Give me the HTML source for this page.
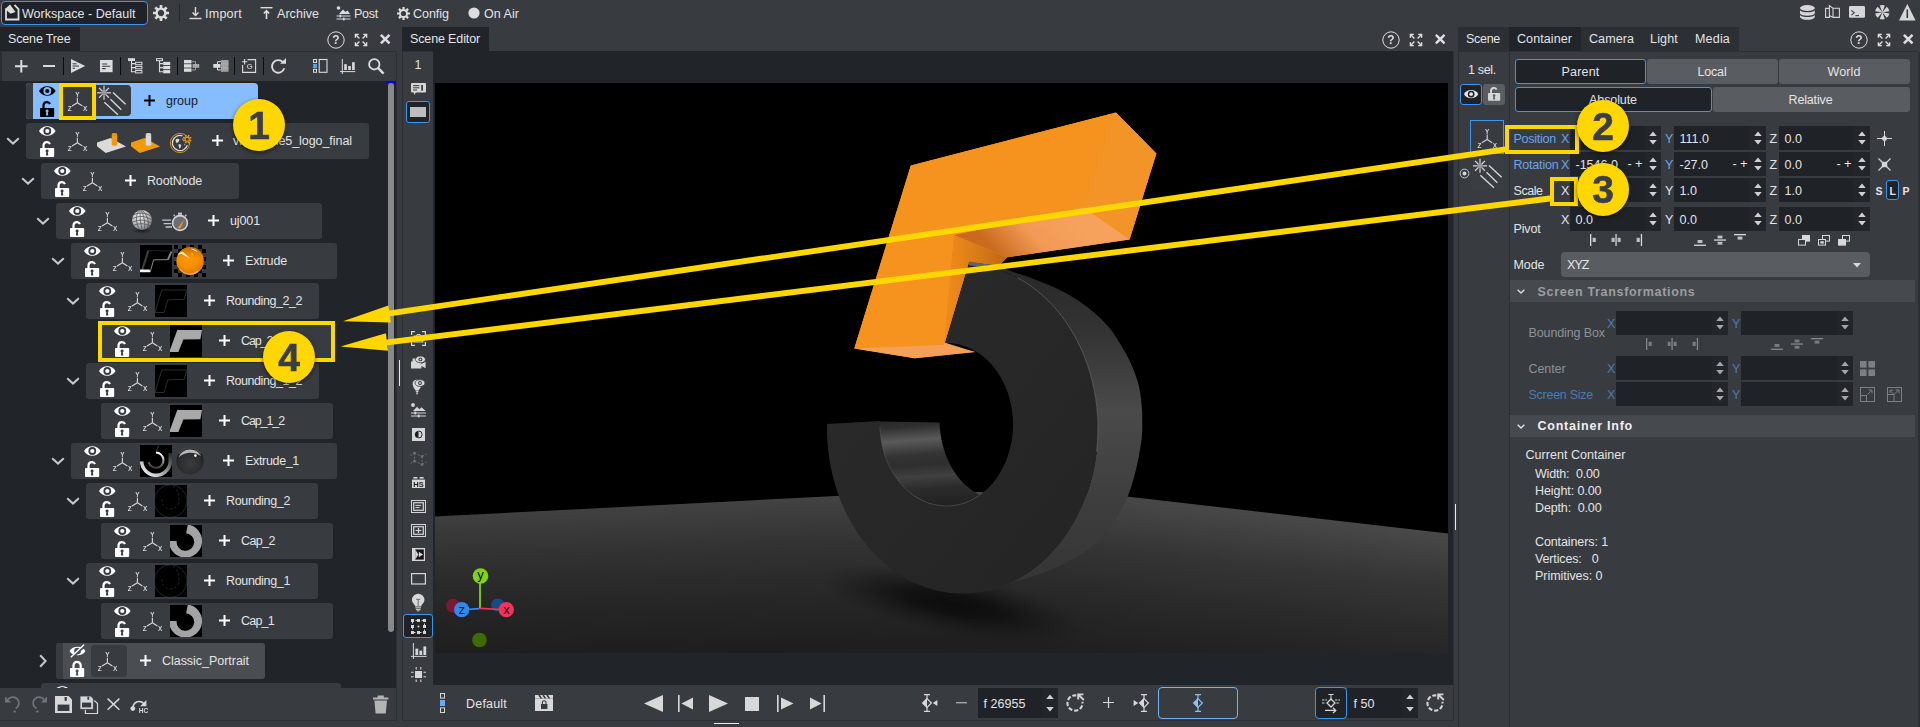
<!DOCTYPE html>
<html><head><meta charset="utf-8"><title>Viz Artist</title>
<style>
html,body{margin:0;padding:0;background:#383b40;}
body{width:1920px;height:727px;overflow:hidden;position:relative;font-family:"Liberation Sans", sans-serif;font-size:12.5px;color:#e4e4e4;}
div,svg{position:absolute;box-sizing:border-box;}
svg{overflow:visible;}
</style></head><body>
<div style="left:1px;top:1px;width:147px;height:24px;background:#1f2228;border:1.5px solid #3a96f0;border-radius:4px;"></div>
<svg style="left:4px;top:4px;" width="17" height="17" viewBox="0 0 17 17"><path d="M2 4.5 V15.5 H14.5 V5 L10.5 1" fill="none" stroke="#ddd" stroke-width="1.8"/><path d="M1 5 L6 0.5 L11.5 8 L6.5 9.8 Z" fill="#ddd"/></svg>
<div style="left:22.00px;top:3.50px;height:20px;line-height:20px;font-size:12.5px;color:#e4e4e4;white-space:pre;letter-spacing:0.025px;">Workspace - Default</div>
<svg style="left:152px;top:3.5px;" width="18" height="18" viewBox="0 0 18 18"><g transform="translate(9,9)"><path d="M4.96 0.00 L8.00 0.00 M3.51 3.51 L5.66 5.66 M0.00 4.96 L0.00 8.00 M-3.51 3.51 L-5.66 5.66 M-4.96 0.00 L-8.00 0.00 M-3.51 -3.51 L-5.66 -5.66 M-0.00 -4.96 L-0.00 -8.00 M3.51 -3.51 L5.66 -5.66 " stroke="#ddd" stroke-width="2.72" fill="none"/><circle r="4.40" fill="none" stroke="#ddd" stroke-width="2.40"/></g></svg>
<div style="left:179px;top:4px;width:1px;height:18px;background:#25282c;"></div>
<svg style="left:189px;top:7px;" width="13" height="13" viewBox="0 0 13 13"><path d="M6.5 0 V8 M3.5 5.5 L6.5 8.5 L9.5 5.5" fill="none" stroke="#ddd" stroke-width="1.4"/><path d="M0.5 11.5 H12.5" stroke="#ddd" stroke-width="1.4"/></svg>
<div style="left:205.00px;top:3.50px;height:20px;line-height:20px;font-size:12.5px;color:#e4e4e4;white-space:pre;letter-spacing:0.260px;">Import</div>
<svg style="left:260px;top:7px;" width="13" height="13" viewBox="0 0 13 13"><path d="M0.5 0.7 H12.5" stroke="#ddd" stroke-width="1.4"/><path d="M6.5 12 V4 M3.8 6.5 L6.5 3.6 L9.2 6.5" fill="none" stroke="#ddd" stroke-width="1.6"/></svg>
<div style="left:277.00px;top:3.50px;height:20px;line-height:20px;font-size:12.5px;color:#e4e4e4;white-space:pre;letter-spacing:0.045px;">Archive</div>
<svg style="left:336px;top:6px;" width="15" height="15" viewBox="0 0 15 15"><circle cx="2.5" cy="2" r="1.8" fill="#ddd"/><path d="M3 8 L7 3.5 L9.5 6 L11.5 4.5 L14 8 Z" fill="#ddd"/><path d="M0.5 10 H14.5 M0.5 13 H14.5" stroke="#ddd" stroke-width="1.1"/><rect x="3.5" y="8.6" width="1.6" height="2.8" fill="#ddd"/><rect x="7" y="11.6" width="1.6" height="2.8" fill="#ddd"/></svg>
<div style="left:354.00px;top:3.50px;height:20px;line-height:20px;font-size:12.5px;color:#e4e4e4;white-space:pre;letter-spacing:-0.254px;">Post</div>
<svg style="left:395.5px;top:5.5px;" width="15.0" height="15.0" viewBox="0 0 15.0 15.0"><g transform="translate(7.5,7.5)"><path d="M4.03 0.00 L6.50 0.00 M2.85 2.85 L4.60 4.60 M0.00 4.03 L0.00 6.50 M-2.85 2.85 L-4.60 4.60 M-4.03 0.00 L-6.50 0.00 M-2.85 -2.85 L-4.60 -4.60 M-0.00 -4.03 L-0.00 -6.50 M2.85 -2.85 L4.60 -4.60 " stroke="#ddd" stroke-width="2.21" fill="none"/><circle r="3.58" fill="none" stroke="#ddd" stroke-width="1.95"/></g></svg>
<div style="left:413.00px;top:3.50px;height:20px;line-height:20px;font-size:12.5px;color:#e4e4e4;white-space:pre;letter-spacing:-0.023px;">Config</div>
<svg style="left:468px;top:7px;" width="12" height="12" viewBox="0 0 12 12"><circle cx="6" cy="6" r="5.6" fill="#ddd"/></svg>
<div style="left:484.00px;top:3.50px;height:20px;line-height:20px;font-size:12.5px;color:#e4e4e4;white-space:pre;letter-spacing:0.042px;">On Air</div>
<div style="left:0px;top:51px;width:396px;height:1px;background:#2d3035;"></div>
<div style="left:402px;top:51px;width:1051px;height:1px;background:#2d3035;"></div>
<div style="left:1458px;top:51px;width:460px;height:1px;background:#2d3035;"></div>
<svg style="left:1799.6px;top:4.6px;" width="14.8" height="14.8" viewBox="0 0 14.8 14.8"><ellipse cx="7.4" cy="3" rx="7.4" ry="3" fill="#d6d6d6"/><path d="M0 5.2 C1.6 8 13.2 8 14.8 5.2 V8.4 C13.2 11.4 1.6 11.4 0 8.4 Z M0 10 C1.6 12.8 13.2 12.8 14.8 10 V12.2 C13.2 15.6 1.6 15.6 0 12.2 Z" fill="#d6d6d6"/></svg>
<svg style="left:1825px;top:5.4px;" width="15" height="13" viewBox="0 0 15 13"><path d="M0.6 3.4 H4.4 V12.4 H0.6 Z M4.4 0.6 L8 3.2 V12.4 L4.4 10.6 Z M8 3.2 H14.4 V12.4 H8 Z" fill="none" stroke="#d6d6d6" stroke-width="1.1"/></svg>
<svg style="left:1849px;top:6px;" width="16" height="11.8" viewBox="0 0 16 11.8"><rect width="16" height="11.8" rx="1.4" fill="#d6d6d6"/><path d="M2.4 4.4 L5.2 6.8 L2.4 9.2" fill="none" stroke="#383b40" stroke-width="1.1"/><path d="M6.4 9.6 H10" stroke="#383b40" stroke-width="1.1"/></svg>
<svg style="left:1874.6px;top:4.9px;" width="14.6" height="14.6" viewBox="-7.3 -7.3 14.6 14.6"><path d="M0 0 L-2.54 -6.74 A7.2 7.2 0 0 1 2.54 -6.74 Z M0 0 L4.57 -5.57 A7.2 7.2 0 0 1 7.10 -1.17 Z M0 0 L7.10 1.17 A7.2 7.2 0 0 1 4.57 5.57 Z M0 0 L2.54 6.74 A7.2 7.2 0 0 1 -2.54 6.74 Z M0 0 L-4.57 5.57 A7.2 7.2 0 0 1 -7.10 1.17 Z M0 0 L-7.10 -1.17 A7.2 7.2 0 0 1 -4.57 -5.57 Z " fill="#d6d6d6"/></svg>
<svg style="left:1898.6px;top:3.8px;" width="16.6" height="16.4" viewBox="0 0 16.6 16.4"><path d="M8.3 0 L16.6 16.4 H0 Z" fill="#d6d6d6"/><rect x="7.5" y="5.4" width="1.6" height="8.6" fill="#383b40"/></svg>
<div style="left:0px;top:27px;width:80px;height:24px;background:#212429;"></div>
<div style="left:8.00px;top:29.00px;height:20px;line-height:20px;font-size:12.5px;color:#e4e4e4;white-space:pre;letter-spacing:-0.144px;">Scene Tree</div>
<svg style="left:326.5px;top:30.6px;will-change:transform;" width="18" height="18" viewBox="0 0 18 18"><circle cx="9" cy="9" r="8.2" fill="none" stroke="#dedede" stroke-width="1"/><text x="9" y="13.2" font-size="12" font-weight="700" fill="#dedede" text-anchor="middle" font-family="Liberation Sans, sans-serif">?</text></svg><svg style="left:354.5px;top:33.6px;" width="12" height="12" viewBox="0 0 12 12"><path d="M0.4 3.8 V0.4 H3.8 M8.2 0.4 H11.6 V3.8 M11.6 8.2 V11.6 H8.2 M3.8 11.6 H0.4 V8.2" fill="none" stroke="#dedede" stroke-width="1.4"/><path d="M0.8 0.8 L4.4 4.4 M11.2 0.8 L7.6 4.4 M11.2 11.2 L7.6 7.6 M0.8 11.2 L4.4 7.6" stroke="#dedede" stroke-width="1.4"/></svg><svg style="left:379.8px;top:34.4px;" width="10.4" height="10.4" viewBox="0 0 10.4 10.4"><path d="M0.9 0.9 L9.5 9.5 M9.5 0.9 L0.9 9.5" stroke="#dedede" stroke-width="2.5"/></svg>
<div style="left:2px;top:52px;width:394px;height:29px;background:#383b40;"></div>
<div style="left:0px;top:81px;width:396px;height:607px;background:#212429;overflow:hidden;"><div style="left:26px;top:2px;width:232px;height:36px;background:#86bdff;border-radius:4px;"></div><div style="left:26px;top:2px;width:7px;height:36px;background:#383b40;border-radius:4px 0 0 4px;"></div><div style="left:63px;top:4px;width:68px;height:31px;background:#383b40;border-radius:0 4px 4px 0;"></div><svg style="left:38.7px;top:4px;" width="16.6" height="12.0" viewBox="0 0 16.6 12"><path d="M0 6 C3.2 -0.4 13.4 -0.4 16.6 6 C13.4 12.4 3.2 12.4 0 6 Z" fill="#000"/><circle cx="8.3" cy="6" r="3.9" fill="#86bdff"/><circle cx="8.3" cy="6" r="2.1" fill="#000"/></svg><svg style="left:39.9px;top:20px;" width="14.2" height="16.0" viewBox="0 0 14.2 16"><path d="M3.5 7.5 V4.4 A3.4 3.4 0 0 1 10 3.1" fill="none" stroke="#000" stroke-width="2.2"/><rect x="0" y="7" width="14.2" height="9" rx="0.9" fill="#000"/><circle cx="7.1" cy="9.9" r="1.5" fill="#86bdff"/><path d="M6.5 10 L5.9 14.5 H8.3 L7.7 10 Z" fill="#86bdff"/></svg><svg style="left:65px;top:9px;will-change:transform;" width="25.0" height="25.0" viewBox="-12 -12 25.00 25.00"><g transform="translate(0.40,0.80)"><path d="M0 -5 V0 M0 0 L-5.4 3.3 M0 0 L5 3.3" stroke="#d4d4d4" stroke-width="1.15" fill="none"/><text x="0" y="-5.7" font-size="6.4" fill="#d4d4d4" text-anchor="middle" font-family="Liberation Sans, sans-serif" font-weight="700">Y</text><text x="-7.8" y="8.3" font-size="6.4" fill="#d4d4d4" text-anchor="middle" font-family="Liberation Sans, sans-serif" font-weight="700">Z</text><text x="7.8" y="8.3" font-size="6.4" fill="#d4d4d4" text-anchor="middle" font-family="Liberation Sans, sans-serif" font-weight="700">X</text></g></svg><div style="left:26px;top:42px;width:343px;height:36px;background:#383b40;border-radius:3px;"></div><svg style="left:38.7px;top:44px;" width="16.6" height="12.0" viewBox="0 0 16.6 12"><path d="M0 6 C3.2 -0.4 13.4 -0.4 16.6 6 C13.4 12.4 3.2 12.4 0 6 Z" fill="#fff"/><circle cx="8.3" cy="6" r="3.9" fill="#383b40"/><circle cx="8.3" cy="6" r="2.1" fill="#fff"/></svg><svg style="left:39.9px;top:60px;" width="14.2" height="16.0" viewBox="0 0 14.2 16"><path d="M3.5 7.5 V4.4 A3.4 3.4 0 0 1 10 3.1" fill="none" stroke="#fff" stroke-width="2.2"/><rect x="0" y="7" width="14.2" height="9" rx="0.9" fill="#fff"/><circle cx="7.1" cy="9.9" r="1.5" fill="#383b40"/><path d="M6.5 10 L5.9 14.5 H8.3 L7.7 10 Z" fill="#383b40"/></svg><svg style="left:65px;top:49px;will-change:transform;" width="25.0" height="25.0" viewBox="-12 -12 25.00 25.00"><g transform="translate(0.40,0.80)"><path d="M0 -5 V0 M0 0 L-5.4 3.3 M0 0 L5 3.3" stroke="#d4d4d4" stroke-width="1.15" fill="none"/><text x="0" y="-5.7" font-size="6.4" fill="#d4d4d4" text-anchor="middle" font-family="Liberation Sans, sans-serif" font-weight="700">Y</text><text x="-7.8" y="8.3" font-size="6.4" fill="#d4d4d4" text-anchor="middle" font-family="Liberation Sans, sans-serif" font-weight="700">Z</text><text x="7.8" y="8.3" font-size="6.4" fill="#d4d4d4" text-anchor="middle" font-family="Liberation Sans, sans-serif" font-weight="700">X</text></g></svg><svg style="left:6px;top:56px;" width="14" height="8" viewBox="0 0 14 8"><path d="M1.2 1.2 L7 6.6 L12.8 1.2" fill="none" stroke="#c8c8c8" stroke-width="2"/></svg><div style="left:41px;top:82px;width:198px;height:36px;background:#383b40;border-radius:3px;"></div><svg style="left:53.7px;top:84px;" width="16.6" height="12.0" viewBox="0 0 16.6 12"><path d="M0 6 C3.2 -0.4 13.4 -0.4 16.6 6 C13.4 12.4 3.2 12.4 0 6 Z" fill="#fff"/><circle cx="8.3" cy="6" r="3.9" fill="#383b40"/><circle cx="8.3" cy="6" r="2.1" fill="#fff"/></svg><svg style="left:54.9px;top:100px;" width="14.2" height="16.0" viewBox="0 0 14.2 16"><path d="M3.5 7.5 V4.4 A3.4 3.4 0 0 1 10 3.1" fill="none" stroke="#fff" stroke-width="2.2"/><rect x="0" y="7" width="14.2" height="9" rx="0.9" fill="#fff"/><circle cx="7.1" cy="9.9" r="1.5" fill="#383b40"/><path d="M6.5 10 L5.9 14.5 H8.3 L7.7 10 Z" fill="#383b40"/></svg><svg style="left:80px;top:89px;will-change:transform;" width="25.0" height="25.0" viewBox="-12 -12 25.00 25.00"><g transform="translate(0.40,0.80)"><path d="M0 -5 V0 M0 0 L-5.4 3.3 M0 0 L5 3.3" stroke="#d4d4d4" stroke-width="1.15" fill="none"/><text x="0" y="-5.7" font-size="6.4" fill="#d4d4d4" text-anchor="middle" font-family="Liberation Sans, sans-serif" font-weight="700">Y</text><text x="-7.8" y="8.3" font-size="6.4" fill="#d4d4d4" text-anchor="middle" font-family="Liberation Sans, sans-serif" font-weight="700">Z</text><text x="7.8" y="8.3" font-size="6.4" fill="#d4d4d4" text-anchor="middle" font-family="Liberation Sans, sans-serif" font-weight="700">X</text></g></svg><svg style="left:21px;top:96px;" width="14" height="8" viewBox="0 0 14 8"><path d="M1.2 1.2 L7 6.6 L12.8 1.2" fill="none" stroke="#c8c8c8" stroke-width="2"/></svg><div style="left:56px;top:122px;width:266px;height:36px;background:#383b40;border-radius:3px;"></div><svg style="left:68.7px;top:124px;" width="16.6" height="12.0" viewBox="0 0 16.6 12"><path d="M0 6 C3.2 -0.4 13.4 -0.4 16.6 6 C13.4 12.4 3.2 12.4 0 6 Z" fill="#fff"/><circle cx="8.3" cy="6" r="3.9" fill="#383b40"/><circle cx="8.3" cy="6" r="2.1" fill="#fff"/></svg><svg style="left:69.9px;top:140px;" width="14.2" height="16.0" viewBox="0 0 14.2 16"><path d="M3.5 7.5 V4.4 A3.4 3.4 0 0 1 10 3.1" fill="none" stroke="#fff" stroke-width="2.2"/><rect x="0" y="7" width="14.2" height="9" rx="0.9" fill="#fff"/><circle cx="7.1" cy="9.9" r="1.5" fill="#383b40"/><path d="M6.5 10 L5.9 14.5 H8.3 L7.7 10 Z" fill="#383b40"/></svg><svg style="left:95px;top:129px;will-change:transform;" width="25.0" height="25.0" viewBox="-12 -12 25.00 25.00"><g transform="translate(0.40,0.80)"><path d="M0 -5 V0 M0 0 L-5.4 3.3 M0 0 L5 3.3" stroke="#d4d4d4" stroke-width="1.15" fill="none"/><text x="0" y="-5.7" font-size="6.4" fill="#d4d4d4" text-anchor="middle" font-family="Liberation Sans, sans-serif" font-weight="700">Y</text><text x="-7.8" y="8.3" font-size="6.4" fill="#d4d4d4" text-anchor="middle" font-family="Liberation Sans, sans-serif" font-weight="700">Z</text><text x="7.8" y="8.3" font-size="6.4" fill="#d4d4d4" text-anchor="middle" font-family="Liberation Sans, sans-serif" font-weight="700">X</text></g></svg><svg style="left:36px;top:136px;" width="14" height="8" viewBox="0 0 14 8"><path d="M1.2 1.2 L7 6.6 L12.8 1.2" fill="none" stroke="#c8c8c8" stroke-width="2"/></svg><div style="left:71px;top:162px;width:266px;height:36px;background:#383b40;border-radius:3px;"></div><svg style="left:83.7px;top:164px;" width="16.6" height="12.0" viewBox="0 0 16.6 12"><path d="M0 6 C3.2 -0.4 13.4 -0.4 16.6 6 C13.4 12.4 3.2 12.4 0 6 Z" fill="#fff"/><circle cx="8.3" cy="6" r="3.9" fill="#383b40"/><circle cx="8.3" cy="6" r="2.1" fill="#fff"/></svg><svg style="left:84.9px;top:180px;" width="14.2" height="16.0" viewBox="0 0 14.2 16"><path d="M3.5 7.5 V4.4 A3.4 3.4 0 0 1 10 3.1" fill="none" stroke="#fff" stroke-width="2.2"/><rect x="0" y="7" width="14.2" height="9" rx="0.9" fill="#fff"/><circle cx="7.1" cy="9.9" r="1.5" fill="#383b40"/><path d="M6.5 10 L5.9 14.5 H8.3 L7.7 10 Z" fill="#383b40"/></svg><svg style="left:110px;top:169px;will-change:transform;" width="25.0" height="25.0" viewBox="-12 -12 25.00 25.00"><g transform="translate(0.40,0.80)"><path d="M0 -5 V0 M0 0 L-5.4 3.3 M0 0 L5 3.3" stroke="#d4d4d4" stroke-width="1.15" fill="none"/><text x="0" y="-5.7" font-size="6.4" fill="#d4d4d4" text-anchor="middle" font-family="Liberation Sans, sans-serif" font-weight="700">Y</text><text x="-7.8" y="8.3" font-size="6.4" fill="#d4d4d4" text-anchor="middle" font-family="Liberation Sans, sans-serif" font-weight="700">Z</text><text x="7.8" y="8.3" font-size="6.4" fill="#d4d4d4" text-anchor="middle" font-family="Liberation Sans, sans-serif" font-weight="700">X</text></g></svg><svg style="left:51px;top:176px;" width="14" height="8" viewBox="0 0 14 8"><path d="M1.2 1.2 L7 6.6 L12.8 1.2" fill="none" stroke="#c8c8c8" stroke-width="2"/></svg><div style="left:86px;top:202px;width:233px;height:36px;background:#383b40;border-radius:3px;"></div><svg style="left:98.7px;top:204px;" width="16.6" height="12.0" viewBox="0 0 16.6 12"><path d="M0 6 C3.2 -0.4 13.4 -0.4 16.6 6 C13.4 12.4 3.2 12.4 0 6 Z" fill="#fff"/><circle cx="8.3" cy="6" r="3.9" fill="#383b40"/><circle cx="8.3" cy="6" r="2.1" fill="#fff"/></svg><svg style="left:99.9px;top:220px;" width="14.2" height="16.0" viewBox="0 0 14.2 16"><path d="M3.5 7.5 V4.4 A3.4 3.4 0 0 1 10 3.1" fill="none" stroke="#fff" stroke-width="2.2"/><rect x="0" y="7" width="14.2" height="9" rx="0.9" fill="#fff"/><circle cx="7.1" cy="9.9" r="1.5" fill="#383b40"/><path d="M6.5 10 L5.9 14.5 H8.3 L7.7 10 Z" fill="#383b40"/></svg><svg style="left:125px;top:209px;will-change:transform;" width="25.0" height="25.0" viewBox="-12 -12 25.00 25.00"><g transform="translate(0.40,0.80)"><path d="M0 -5 V0 M0 0 L-5.4 3.3 M0 0 L5 3.3" stroke="#d4d4d4" stroke-width="1.15" fill="none"/><text x="0" y="-5.7" font-size="6.4" fill="#d4d4d4" text-anchor="middle" font-family="Liberation Sans, sans-serif" font-weight="700">Y</text><text x="-7.8" y="8.3" font-size="6.4" fill="#d4d4d4" text-anchor="middle" font-family="Liberation Sans, sans-serif" font-weight="700">Z</text><text x="7.8" y="8.3" font-size="6.4" fill="#d4d4d4" text-anchor="middle" font-family="Liberation Sans, sans-serif" font-weight="700">X</text></g></svg><svg style="left:66px;top:216px;" width="14" height="8" viewBox="0 0 14 8"><path d="M1.2 1.2 L7 6.6 L12.8 1.2" fill="none" stroke="#c8c8c8" stroke-width="2"/></svg><div style="left:101px;top:242px;width:232px;height:36px;background:#383b40;border-radius:3px;"></div><svg style="left:113.7px;top:244px;" width="16.6" height="12.0" viewBox="0 0 16.6 12"><path d="M0 6 C3.2 -0.4 13.4 -0.4 16.6 6 C13.4 12.4 3.2 12.4 0 6 Z" fill="#fff"/><circle cx="8.3" cy="6" r="3.9" fill="#383b40"/><circle cx="8.3" cy="6" r="2.1" fill="#fff"/></svg><svg style="left:114.9px;top:260px;" width="14.2" height="16.0" viewBox="0 0 14.2 16"><path d="M3.5 7.5 V4.4 A3.4 3.4 0 0 1 10 3.1" fill="none" stroke="#fff" stroke-width="2.2"/><rect x="0" y="7" width="14.2" height="9" rx="0.9" fill="#fff"/><circle cx="7.1" cy="9.9" r="1.5" fill="#383b40"/><path d="M6.5 10 L5.9 14.5 H8.3 L7.7 10 Z" fill="#383b40"/></svg><svg style="left:140px;top:249px;will-change:transform;" width="25.0" height="25.0" viewBox="-12 -12 25.00 25.00"><g transform="translate(0.40,0.80)"><path d="M0 -5 V0 M0 0 L-5.4 3.3 M0 0 L5 3.3" stroke="#d4d4d4" stroke-width="1.15" fill="none"/><text x="0" y="-5.7" font-size="6.4" fill="#d4d4d4" text-anchor="middle" font-family="Liberation Sans, sans-serif" font-weight="700">Y</text><text x="-7.8" y="8.3" font-size="6.4" fill="#d4d4d4" text-anchor="middle" font-family="Liberation Sans, sans-serif" font-weight="700">Z</text><text x="7.8" y="8.3" font-size="6.4" fill="#d4d4d4" text-anchor="middle" font-family="Liberation Sans, sans-serif" font-weight="700">X</text></g></svg><div style="left:86px;top:282px;width:233px;height:36px;background:#383b40;border-radius:3px;"></div><svg style="left:98.7px;top:284px;" width="16.6" height="12.0" viewBox="0 0 16.6 12"><path d="M0 6 C3.2 -0.4 13.4 -0.4 16.6 6 C13.4 12.4 3.2 12.4 0 6 Z" fill="#fff"/><circle cx="8.3" cy="6" r="3.9" fill="#383b40"/><circle cx="8.3" cy="6" r="2.1" fill="#fff"/></svg><svg style="left:99.9px;top:300px;" width="14.2" height="16.0" viewBox="0 0 14.2 16"><path d="M3.5 7.5 V4.4 A3.4 3.4 0 0 1 10 3.1" fill="none" stroke="#fff" stroke-width="2.2"/><rect x="0" y="7" width="14.2" height="9" rx="0.9" fill="#fff"/><circle cx="7.1" cy="9.9" r="1.5" fill="#383b40"/><path d="M6.5 10 L5.9 14.5 H8.3 L7.7 10 Z" fill="#383b40"/></svg><svg style="left:125px;top:289px;will-change:transform;" width="25.0" height="25.0" viewBox="-12 -12 25.00 25.00"><g transform="translate(0.40,0.80)"><path d="M0 -5 V0 M0 0 L-5.4 3.3 M0 0 L5 3.3" stroke="#d4d4d4" stroke-width="1.15" fill="none"/><text x="0" y="-5.7" font-size="6.4" fill="#d4d4d4" text-anchor="middle" font-family="Liberation Sans, sans-serif" font-weight="700">Y</text><text x="-7.8" y="8.3" font-size="6.4" fill="#d4d4d4" text-anchor="middle" font-family="Liberation Sans, sans-serif" font-weight="700">Z</text><text x="7.8" y="8.3" font-size="6.4" fill="#d4d4d4" text-anchor="middle" font-family="Liberation Sans, sans-serif" font-weight="700">X</text></g></svg><svg style="left:66px;top:296px;" width="14" height="8" viewBox="0 0 14 8"><path d="M1.2 1.2 L7 6.6 L12.8 1.2" fill="none" stroke="#c8c8c8" stroke-width="2"/></svg><div style="left:101px;top:322px;width:232px;height:36px;background:#383b40;border-radius:3px;"></div><svg style="left:113.7px;top:324px;" width="16.6" height="12.0" viewBox="0 0 16.6 12"><path d="M0 6 C3.2 -0.4 13.4 -0.4 16.6 6 C13.4 12.4 3.2 12.4 0 6 Z" fill="#fff"/><circle cx="8.3" cy="6" r="3.9" fill="#383b40"/><circle cx="8.3" cy="6" r="2.1" fill="#fff"/></svg><svg style="left:114.9px;top:340px;" width="14.2" height="16.0" viewBox="0 0 14.2 16"><path d="M3.5 7.5 V4.4 A3.4 3.4 0 0 1 10 3.1" fill="none" stroke="#fff" stroke-width="2.2"/><rect x="0" y="7" width="14.2" height="9" rx="0.9" fill="#fff"/><circle cx="7.1" cy="9.9" r="1.5" fill="#383b40"/><path d="M6.5 10 L5.9 14.5 H8.3 L7.7 10 Z" fill="#383b40"/></svg><svg style="left:140px;top:329px;will-change:transform;" width="25.0" height="25.0" viewBox="-12 -12 25.00 25.00"><g transform="translate(0.40,0.80)"><path d="M0 -5 V0 M0 0 L-5.4 3.3 M0 0 L5 3.3" stroke="#d4d4d4" stroke-width="1.15" fill="none"/><text x="0" y="-5.7" font-size="6.4" fill="#d4d4d4" text-anchor="middle" font-family="Liberation Sans, sans-serif" font-weight="700">Y</text><text x="-7.8" y="8.3" font-size="6.4" fill="#d4d4d4" text-anchor="middle" font-family="Liberation Sans, sans-serif" font-weight="700">Z</text><text x="7.8" y="8.3" font-size="6.4" fill="#d4d4d4" text-anchor="middle" font-family="Liberation Sans, sans-serif" font-weight="700">X</text></g></svg><div style="left:71px;top:362px;width:266px;height:36px;background:#383b40;border-radius:3px;"></div><svg style="left:83.7px;top:364px;" width="16.6" height="12.0" viewBox="0 0 16.6 12"><path d="M0 6 C3.2 -0.4 13.4 -0.4 16.6 6 C13.4 12.4 3.2 12.4 0 6 Z" fill="#fff"/><circle cx="8.3" cy="6" r="3.9" fill="#383b40"/><circle cx="8.3" cy="6" r="2.1" fill="#fff"/></svg><svg style="left:84.9px;top:380px;" width="14.2" height="16.0" viewBox="0 0 14.2 16"><path d="M3.5 7.5 V4.4 A3.4 3.4 0 0 1 10 3.1" fill="none" stroke="#fff" stroke-width="2.2"/><rect x="0" y="7" width="14.2" height="9" rx="0.9" fill="#fff"/><circle cx="7.1" cy="9.9" r="1.5" fill="#383b40"/><path d="M6.5 10 L5.9 14.5 H8.3 L7.7 10 Z" fill="#383b40"/></svg><svg style="left:110px;top:369px;will-change:transform;" width="25.0" height="25.0" viewBox="-12 -12 25.00 25.00"><g transform="translate(0.40,0.80)"><path d="M0 -5 V0 M0 0 L-5.4 3.3 M0 0 L5 3.3" stroke="#d4d4d4" stroke-width="1.15" fill="none"/><text x="0" y="-5.7" font-size="6.4" fill="#d4d4d4" text-anchor="middle" font-family="Liberation Sans, sans-serif" font-weight="700">Y</text><text x="-7.8" y="8.3" font-size="6.4" fill="#d4d4d4" text-anchor="middle" font-family="Liberation Sans, sans-serif" font-weight="700">Z</text><text x="7.8" y="8.3" font-size="6.4" fill="#d4d4d4" text-anchor="middle" font-family="Liberation Sans, sans-serif" font-weight="700">X</text></g></svg><svg style="left:51px;top:376px;" width="14" height="8" viewBox="0 0 14 8"><path d="M1.2 1.2 L7 6.6 L12.8 1.2" fill="none" stroke="#c8c8c8" stroke-width="2"/></svg><div style="left:86px;top:402px;width:232px;height:36px;background:#383b40;border-radius:3px;"></div><svg style="left:98.7px;top:404px;" width="16.6" height="12.0" viewBox="0 0 16.6 12"><path d="M0 6 C3.2 -0.4 13.4 -0.4 16.6 6 C13.4 12.4 3.2 12.4 0 6 Z" fill="#fff"/><circle cx="8.3" cy="6" r="3.9" fill="#383b40"/><circle cx="8.3" cy="6" r="2.1" fill="#fff"/></svg><svg style="left:99.9px;top:420px;" width="14.2" height="16.0" viewBox="0 0 14.2 16"><path d="M3.5 7.5 V4.4 A3.4 3.4 0 0 1 10 3.1" fill="none" stroke="#fff" stroke-width="2.2"/><rect x="0" y="7" width="14.2" height="9" rx="0.9" fill="#fff"/><circle cx="7.1" cy="9.9" r="1.5" fill="#383b40"/><path d="M6.5 10 L5.9 14.5 H8.3 L7.7 10 Z" fill="#383b40"/></svg><svg style="left:125px;top:409px;will-change:transform;" width="25.0" height="25.0" viewBox="-12 -12 25.00 25.00"><g transform="translate(0.40,0.80)"><path d="M0 -5 V0 M0 0 L-5.4 3.3 M0 0 L5 3.3" stroke="#d4d4d4" stroke-width="1.15" fill="none"/><text x="0" y="-5.7" font-size="6.4" fill="#d4d4d4" text-anchor="middle" font-family="Liberation Sans, sans-serif" font-weight="700">Y</text><text x="-7.8" y="8.3" font-size="6.4" fill="#d4d4d4" text-anchor="middle" font-family="Liberation Sans, sans-serif" font-weight="700">Z</text><text x="7.8" y="8.3" font-size="6.4" fill="#d4d4d4" text-anchor="middle" font-family="Liberation Sans, sans-serif" font-weight="700">X</text></g></svg><svg style="left:66px;top:416px;" width="14" height="8" viewBox="0 0 14 8"><path d="M1.2 1.2 L7 6.6 L12.8 1.2" fill="none" stroke="#c8c8c8" stroke-width="2"/></svg><div style="left:101px;top:442px;width:232px;height:36px;background:#383b40;border-radius:3px;"></div><svg style="left:113.7px;top:444px;" width="16.6" height="12.0" viewBox="0 0 16.6 12"><path d="M0 6 C3.2 -0.4 13.4 -0.4 16.6 6 C13.4 12.4 3.2 12.4 0 6 Z" fill="#fff"/><circle cx="8.3" cy="6" r="3.9" fill="#383b40"/><circle cx="8.3" cy="6" r="2.1" fill="#fff"/></svg><svg style="left:114.9px;top:460px;" width="14.2" height="16.0" viewBox="0 0 14.2 16"><path d="M3.5 7.5 V4.4 A3.4 3.4 0 0 1 10 3.1" fill="none" stroke="#fff" stroke-width="2.2"/><rect x="0" y="7" width="14.2" height="9" rx="0.9" fill="#fff"/><circle cx="7.1" cy="9.9" r="1.5" fill="#383b40"/><path d="M6.5 10 L5.9 14.5 H8.3 L7.7 10 Z" fill="#383b40"/></svg><svg style="left:140px;top:449px;will-change:transform;" width="25.0" height="25.0" viewBox="-12 -12 25.00 25.00"><g transform="translate(0.40,0.80)"><path d="M0 -5 V0 M0 0 L-5.4 3.3 M0 0 L5 3.3" stroke="#d4d4d4" stroke-width="1.15" fill="none"/><text x="0" y="-5.7" font-size="6.4" fill="#d4d4d4" text-anchor="middle" font-family="Liberation Sans, sans-serif" font-weight="700">Y</text><text x="-7.8" y="8.3" font-size="6.4" fill="#d4d4d4" text-anchor="middle" font-family="Liberation Sans, sans-serif" font-weight="700">Z</text><text x="7.8" y="8.3" font-size="6.4" fill="#d4d4d4" text-anchor="middle" font-family="Liberation Sans, sans-serif" font-weight="700">X</text></g></svg><div style="left:86px;top:482px;width:232px;height:36px;background:#383b40;border-radius:3px;"></div><svg style="left:98.7px;top:484px;" width="16.6" height="12.0" viewBox="0 0 16.6 12"><path d="M0 6 C3.2 -0.4 13.4 -0.4 16.6 6 C13.4 12.4 3.2 12.4 0 6 Z" fill="#fff"/><circle cx="8.3" cy="6" r="3.9" fill="#383b40"/><circle cx="8.3" cy="6" r="2.1" fill="#fff"/></svg><svg style="left:99.9px;top:500px;" width="14.2" height="16.0" viewBox="0 0 14.2 16"><path d="M3.5 7.5 V4.4 A3.4 3.4 0 0 1 10 3.1" fill="none" stroke="#fff" stroke-width="2.2"/><rect x="0" y="7" width="14.2" height="9" rx="0.9" fill="#fff"/><circle cx="7.1" cy="9.9" r="1.5" fill="#383b40"/><path d="M6.5 10 L5.9 14.5 H8.3 L7.7 10 Z" fill="#383b40"/></svg><svg style="left:125px;top:489px;will-change:transform;" width="25.0" height="25.0" viewBox="-12 -12 25.00 25.00"><g transform="translate(0.40,0.80)"><path d="M0 -5 V0 M0 0 L-5.4 3.3 M0 0 L5 3.3" stroke="#d4d4d4" stroke-width="1.15" fill="none"/><text x="0" y="-5.7" font-size="6.4" fill="#d4d4d4" text-anchor="middle" font-family="Liberation Sans, sans-serif" font-weight="700">Y</text><text x="-7.8" y="8.3" font-size="6.4" fill="#d4d4d4" text-anchor="middle" font-family="Liberation Sans, sans-serif" font-weight="700">Z</text><text x="7.8" y="8.3" font-size="6.4" fill="#d4d4d4" text-anchor="middle" font-family="Liberation Sans, sans-serif" font-weight="700">X</text></g></svg><svg style="left:66px;top:496px;" width="14" height="8" viewBox="0 0 14 8"><path d="M1.2 1.2 L7 6.6 L12.8 1.2" fill="none" stroke="#c8c8c8" stroke-width="2"/></svg><div style="left:101px;top:522px;width:232px;height:36px;background:#383b40;border-radius:3px;"></div><svg style="left:113.7px;top:524px;" width="16.6" height="12.0" viewBox="0 0 16.6 12"><path d="M0 6 C3.2 -0.4 13.4 -0.4 16.6 6 C13.4 12.4 3.2 12.4 0 6 Z" fill="#fff"/><circle cx="8.3" cy="6" r="3.9" fill="#383b40"/><circle cx="8.3" cy="6" r="2.1" fill="#fff"/></svg><svg style="left:114.9px;top:540px;" width="14.2" height="16.0" viewBox="0 0 14.2 16"><path d="M3.5 7.5 V4.4 A3.4 3.4 0 0 1 10 3.1" fill="none" stroke="#fff" stroke-width="2.2"/><rect x="0" y="7" width="14.2" height="9" rx="0.9" fill="#fff"/><circle cx="7.1" cy="9.9" r="1.5" fill="#383b40"/><path d="M6.5 10 L5.9 14.5 H8.3 L7.7 10 Z" fill="#383b40"/></svg><svg style="left:140px;top:529px;will-change:transform;" width="25.0" height="25.0" viewBox="-12 -12 25.00 25.00"><g transform="translate(0.40,0.80)"><path d="M0 -5 V0 M0 0 L-5.4 3.3 M0 0 L5 3.3" stroke="#d4d4d4" stroke-width="1.15" fill="none"/><text x="0" y="-5.7" font-size="6.4" fill="#d4d4d4" text-anchor="middle" font-family="Liberation Sans, sans-serif" font-weight="700">Y</text><text x="-7.8" y="8.3" font-size="6.4" fill="#d4d4d4" text-anchor="middle" font-family="Liberation Sans, sans-serif" font-weight="700">Z</text><text x="7.8" y="8.3" font-size="6.4" fill="#d4d4d4" text-anchor="middle" font-family="Liberation Sans, sans-serif" font-weight="700">X</text></g></svg><div style="left:56px;top:562px;width:209px;height:36px;background:#4a4d52;border-radius:3px;"></div><div style="left:56px;top:562px;width:7px;height:36px;background:#383b40;border-radius:3px 0 0 3px;"></div><div style="left:91px;top:564px;width:36px;height:32px;background:#383b40;border-radius:4px;"></div><svg style="left:68.5px;top:563px;" width="17" height="14" viewBox="0 0 17 14"><path d="M0.6 7 C3.6 1.2 13.4 1.2 16.4 7 C13.4 12.8 3.6 12.8 0.6 7 Z" fill="#fff"/><ellipse cx="8.5" cy="7" rx="3.4" ry="3.2" fill="#4a4d52"/><path d="M2.8 14 L16 1.6" stroke="#4a4d52" stroke-width="2.2"/><path d="M1.8 13.2 L15 0.8" stroke="#fff" stroke-width="1.4"/></svg><svg style="left:69.9px;top:580px;" width="14.2" height="16" viewBox="0 0 14.2 16"><path d="M3.5 7.5 V4.4 A3.6 3.6 0 0 1 10.7 4.4 V7.5" fill="none" stroke="#fff" stroke-width="2.2"/><rect x="0" y="7" width="14.2" height="9" rx="0.9" fill="#fff"/><circle cx="7.1" cy="9.9" r="1.5" fill="#4a4d52"/><path d="M6.5 10 L5.9 14.5 H8.3 L7.7 10 Z" fill="#4a4d52"/></svg><svg style="left:95px;top:569px;will-change:transform;" width="25.0" height="25.0" viewBox="-12 -12 25.00 25.00"><g transform="translate(0.40,0.80)"><path d="M0 -5 V0 M0 0 L-5.4 3.3 M0 0 L5 3.3" stroke="#d4d4d4" stroke-width="1.15" fill="none"/><text x="0" y="-5.7" font-size="6.4" fill="#d4d4d4" text-anchor="middle" font-family="Liberation Sans, sans-serif" font-weight="700">Y</text><text x="-7.8" y="8.3" font-size="6.4" fill="#d4d4d4" text-anchor="middle" font-family="Liberation Sans, sans-serif" font-weight="700">Z</text><text x="7.8" y="8.3" font-size="6.4" fill="#d4d4d4" text-anchor="middle" font-family="Liberation Sans, sans-serif" font-weight="700">X</text></g></svg><svg style="left:39px;top:573px;" width="8" height="14" viewBox="0 0 8 14"><path d="M1.2 1.2 L6.6 7 L1.2 12.8" fill="none" stroke="#c8c8c8" stroke-width="2"/></svg><div style="left:41px;top:602px;width:300px;height:36px;background:#383b40;border-radius:3px;"></div><svg style="left:53.7px;top:604px;" width="16.6" height="12.0" viewBox="0 0 16.6 12"><path d="M0 6 C3.2 -0.4 13.4 -0.4 16.6 6 C13.4 12.4 3.2 12.4 0 6 Z" fill="#fff"/><circle cx="8.3" cy="6" r="3.9" fill="#383b40"/><circle cx="8.3" cy="6" r="2.1" fill="#fff"/></svg></div>
<div style="left:0px;top:52px;width:1.5px;height:29px;background:#2a2d32;"></div>
<div style="left:0px;top:688px;width:396px;height:32px;background:#383b40;"></div>
<div style="left:0px;top:720px;width:396px;height:1px;background:#2e3136;"></div>
<svg style="left:14.5px;top:59.7px;" width="12.6" height="12.6" viewBox="0 0 12.6 12.6"><path d="M6.3 0 V12.6 M0 6.3 H12.6" stroke="#dcdcdc" stroke-width="2" fill="none"/></svg>
<svg style="left:43px;top:65px;" width="12" height="2" viewBox="0 0 12 2"><rect width="12" height="2" fill="#dcdcdc"/></svg>
<div style="left:63px;top:57px;width:1px;height:18px;background:#0c0d0f;"></div>
<div style="left:120px;top:57px;width:1px;height:18px;background:#0c0d0f;"></div>
<div style="left:177px;top:57px;width:1px;height:18px;background:#0c0d0f;"></div>
<div style="left:234px;top:57px;width:1px;height:18px;background:#0c0d0f;"></div>
<div style="left:263px;top:57px;width:1px;height:18px;background:#0c0d0f;"></div>
<svg style="left:70.8px;top:59px;" width="14.5" height="14" viewBox="0 0 14.5 14"><path d="M0 0 L14.2 7 L0 14 Z" fill="#dcdcdc"/><path d="M1.6 4.8 H5.6 M1.6 7 H8 M1.6 9.2 H4" stroke="#383b40" stroke-width="1"/></svg>
<svg style="left:99.8px;top:60px;" width="12.6" height="12.2" viewBox="0 0 12.6 12.2"><rect width="12.6" height="12.2" fill="#dcdcdc"/><path d="M2.2 4 H7.2 M2.2 6.3 H10.2 M2.2 8.6 H5.6" stroke="#383b40" stroke-width="1.1"/></svg>
<svg style="left:128px;top:57.6px;" width="14.5" height="15.6" viewBox="0 0 14.5 15.6"><rect x="0" y="0.2" width="7" height="2.8" fill="#dcdcdc"/><path d="M3.5 3 V13.8 H7 M3.5 5.6 H7 M3.5 9.6 H7" fill="none" stroke="#dcdcdc" stroke-width="1.1"/><rect x="7.6" y="4.3" width="6.3" height="2.4" fill="none" stroke="#dcdcdc" stroke-width="1"/><rect x="7.6" y="8.4" width="6.3" height="2.4" fill="none" stroke="#dcdcdc" stroke-width="1"/><rect x="7.6" y="12.5" width="6.3" height="2.4" fill="none" stroke="#dcdcdc" stroke-width="1"/></svg>
<svg style="left:156px;top:57.6px;" width="14.5" height="15.6" viewBox="0 0 14.5 15.6"><rect x="0.5" y="0.7" width="6" height="2" fill="none" stroke="#dcdcdc" stroke-width="1"/><path d="M3.5 3 V13.8 H7 M3.5 5.6 H7 M3.5 9.6 H7" fill="none" stroke="#dcdcdc" stroke-width="1.1"/><rect x="7.2" y="3.9" width="7" height="3.2" fill="#dcdcdc"/><rect x="7.2" y="8" width="7" height="3.2" fill="#dcdcdc"/><rect x="7.2" y="12.1" width="7" height="3.2" fill="#dcdcdc"/></svg>
<svg style="left:184px;top:60px;" width="15.5" height="12" viewBox="0 0 15.5 12"><rect x="0" y="0" width="7.5" height="3.4" fill="#dcdcdc"/><rect x="0" y="4.2" width="7.5" height="3.4" fill="#dcdcdc"/><rect x="0" y="8.4" width="7.5" height="3.4" fill="#dcdcdc"/><path d="M7.5 1.7 H11.5 V10 H7.5" fill="none" stroke="#9a9a9a" stroke-width="1"/><rect x="8.6" y="4" width="6.6" height="3.8" fill="#a8a8a8"/></svg>
<svg style="left:213px;top:60px;" width="15.5" height="12" viewBox="0 0 15.5 12"><rect x="8" y="0" width="7.5" height="11.8" fill="#a0a0a0"/><path d="M4.5 1.7 H8 M4.5 10 H8 M4.5 1.7 V10" fill="none" stroke="#dcdcdc" stroke-width="1"/><rect x="0.3" y="4" width="7.2" height="3.8" fill="#dcdcdc"/><path d="M8 3.9 H15.5 M8 8 H15.5" stroke="#c8c8c8" stroke-width="0.8" stroke-dasharray="1.2 1"/></svg>
<svg style="left:242px;top:59px;will-change:transform;" width="14.5" height="14" viewBox="0 0 14.5 14"><path d="M5.5 0.6 H13.6 V13.4 H0.6 V6" fill="none" stroke="#dcdcdc" stroke-width="1.1"/><path d="M2.6 0 V5.4 M0 2.7 H5.3" stroke="#dcdcdc" stroke-width="1.1"/><text x="7.6" y="10.1" font-size="8" font-weight="700" fill="#b8b8b8" text-anchor="middle" font-family="Liberation Sans, sans-serif">G</text></svg>
<svg style="left:270px;top:58px;" width="17" height="16.5" viewBox="0 0 17 16.5"><path d="M12.9 4.1 A6.3 6.3 0 1 0 14.3 10.3" fill="none" stroke="#dcdcdc" stroke-width="1.8"/><path d="M10.2 5.8 L16 5.8 L16 0 Z" fill="#dcdcdc"/></svg>
<svg style="left:313px;top:59px;" width="14.5" height="14" viewBox="0 0 14.5 14"><rect x="0.5" y="0.5" width="3" height="3" fill="none" stroke="#dcdcdc" stroke-width="1"/><rect x="0" y="5" width="4" height="4" fill="#5f9dea"/><rect x="0.5" y="10.3" width="3" height="3" fill="none" stroke="#dcdcdc" stroke-width="1"/><rect x="6.2" y="0.5" width="7.8" height="12.8" fill="none" stroke="#dcdcdc" stroke-width="1.1"/></svg>
<svg style="left:340px;top:59px;" width="15.5" height="15" viewBox="0 0 15.5 15"><path d="M2.3 0 V15 M0 12.6 H15.2" stroke="#dcdcdc" stroke-width="1" fill="none"/><rect x="4.2" y="5.2" width="2.6" height="5.8" fill="#dcdcdc"/><rect x="8.2" y="7" width="2.6" height="4" fill="#dcdcdc"/><rect x="12.1" y="3.2" width="2.6" height="7.8" fill="#dcdcdc"/></svg>
<svg style="left:368px;top:58px;" width="17" height="17" viewBox="0 0 17 17"><circle cx="6.3" cy="6.3" r="5.2" fill="none" stroke="#dcdcdc" stroke-width="1.8"/><path d="M10.2 10.2 L15.6 15.6" stroke="#dcdcdc" stroke-width="2.4"/></svg>
<div style="left:386px;top:81px;width:10px;height:2px;background:#0000ff;"></div>
<div style="left:388px;top:83px;width:6px;height:549px;background:#88898b;border-radius:3px;"></div>
<svg style="left:143.5px;top:94.7px;" width="11.0" height="11.0" viewBox="0 0 11.0 11.0"><path d="M5.5 0 V11.0 M0 5.5 H11.0" stroke="#000" stroke-width="2" fill="none"/></svg>
<div style="left:166.00px;top:91.00px;height:20px;line-height:20px;font-size:12.5px;color:#1a1a1a;white-space:pre;">group</div>
<svg style="left:211.5px;top:134.7px;" width="11.0" height="11.0" viewBox="0 0 11.0 11.0"><path d="M5.5 0 V11.0 M0 5.5 H11.0" stroke="#fff" stroke-width="2" fill="none"/></svg>
<div style="left:233.00px;top:131.00px;height:20px;line-height:20px;font-size:12.5px;color:#e4e4e4;white-space:pre;letter-spacing:-0.059px;">vizengine5_logo_final</div>
<svg style="left:124.5px;top:174.7px;" width="11.0" height="11.0" viewBox="0 0 11.0 11.0"><path d="M5.5 0 V11.0 M0 5.5 H11.0" stroke="#fff" stroke-width="2" fill="none"/></svg>
<div style="left:147.00px;top:171.00px;height:20px;line-height:20px;font-size:12.5px;color:#e4e4e4;white-space:pre;letter-spacing:-0.162px;">RootNode</div>
<svg style="left:207.5px;top:214.7px;" width="11.0" height="11.0" viewBox="0 0 11.0 11.0"><path d="M5.5 0 V11.0 M0 5.5 H11.0" stroke="#fff" stroke-width="2" fill="none"/></svg>
<div style="left:230.00px;top:211.00px;height:20px;line-height:20px;font-size:12.5px;color:#e4e4e4;white-space:pre;letter-spacing:-0.119px;">uj001</div>
<svg style="left:222.5px;top:254.7px;" width="11.0" height="11.0" viewBox="0 0 11.0 11.0"><path d="M5.5 0 V11.0 M0 5.5 H11.0" stroke="#fff" stroke-width="2" fill="none"/></svg>
<div style="left:245.00px;top:251.00px;height:20px;line-height:20px;font-size:12.5px;color:#e4e4e4;white-space:pre;letter-spacing:-0.156px;">Extrude</div>
<svg style="left:203.5px;top:294.7px;" width="11.0" height="11.0" viewBox="0 0 11.0 11.0"><path d="M5.5 0 V11.0 M0 5.5 H11.0" stroke="#fff" stroke-width="2" fill="none"/></svg>
<div style="left:226.00px;top:291.00px;height:20px;line-height:20px;font-size:12.5px;color:#e4e4e4;white-space:pre;letter-spacing:-0.444px;">Rounding_2_2</div>
<svg style="left:218.5px;top:334.7px;" width="11.0" height="11.0" viewBox="0 0 11.0 11.0"><path d="M5.5 0 V11.0 M0 5.5 H11.0" stroke="#fff" stroke-width="2" fill="none"/></svg>
<div style="left:241.00px;top:331.00px;height:20px;line-height:20px;font-size:12.5px;color:#e4e4e4;white-space:pre;letter-spacing:-1.107px;">Cap_2_2</div>
<svg style="left:203.5px;top:374.7px;" width="11.0" height="11.0" viewBox="0 0 11.0 11.0"><path d="M5.5 0 V11.0 M0 5.5 H11.0" stroke="#fff" stroke-width="2" fill="none"/></svg>
<div style="left:226.00px;top:371.00px;height:20px;line-height:20px;font-size:12.5px;color:#e4e4e4;white-space:pre;letter-spacing:-0.444px;">Rounding_1_2</div>
<svg style="left:218.5px;top:414.7px;" width="11.0" height="11.0" viewBox="0 0 11.0 11.0"><path d="M5.5 0 V11.0 M0 5.5 H11.0" stroke="#fff" stroke-width="2" fill="none"/></svg>
<div style="left:241.00px;top:411.00px;height:20px;line-height:20px;font-size:12.5px;color:#e4e4e4;white-space:pre;letter-spacing:-1.107px;">Cap_1_2</div>
<svg style="left:222.5px;top:454.7px;" width="11.0" height="11.0" viewBox="0 0 11.0 11.0"><path d="M5.5 0 V11.0 M0 5.5 H11.0" stroke="#fff" stroke-width="2" fill="none"/></svg>
<div style="left:245.00px;top:451.00px;height:20px;line-height:20px;font-size:12.5px;color:#e4e4e4;white-space:pre;letter-spacing:-0.332px;">Extrude_1</div>
<svg style="left:203.5px;top:494.7px;" width="11.0" height="11.0" viewBox="0 0 11.0 11.0"><path d="M5.5 0 V11.0 M0 5.5 H11.0" stroke="#fff" stroke-width="2" fill="none"/></svg>
<div style="left:226.00px;top:491.00px;height:20px;line-height:20px;font-size:12.5px;color:#e4e4e4;white-space:pre;letter-spacing:-0.342px;">Rounding_2</div>
<svg style="left:218.5px;top:534.7px;" width="11.0" height="11.0" viewBox="0 0 11.0 11.0"><path d="M5.5 0 V11.0 M0 5.5 H11.0" stroke="#fff" stroke-width="2" fill="none"/></svg>
<div style="left:241.00px;top:531.00px;height:20px;line-height:20px;font-size:12.5px;color:#e4e4e4;white-space:pre;letter-spacing:-0.569px;">Cap_2</div>
<svg style="left:203.5px;top:574.7px;" width="11.0" height="11.0" viewBox="0 0 11.0 11.0"><path d="M5.5 0 V11.0 M0 5.5 H11.0" stroke="#fff" stroke-width="2" fill="none"/></svg>
<div style="left:226.00px;top:571.00px;height:20px;line-height:20px;font-size:12.5px;color:#e4e4e4;white-space:pre;letter-spacing:-0.342px;">Rounding_1</div>
<svg style="left:218.5px;top:614.7px;" width="11.0" height="11.0" viewBox="0 0 11.0 11.0"><path d="M5.5 0 V11.0 M0 5.5 H11.0" stroke="#fff" stroke-width="2" fill="none"/></svg>
<div style="left:241.00px;top:611.00px;height:20px;line-height:20px;font-size:12.5px;color:#e4e4e4;white-space:pre;letter-spacing:-0.769px;">Cap_1</div>
<svg style="left:139.5px;top:654.7px;" width="11.0" height="11.0" viewBox="0 0 11.0 11.0"><path d="M5.5 0 V11.0 M0 5.5 H11.0" stroke="#fff" stroke-width="2" fill="none"/></svg>
<div style="left:162.00px;top:651.00px;height:20px;line-height:20px;font-size:12.5px;color:#e4e4e4;white-space:pre;letter-spacing:-0.033px;">Classic_Portrait</div>
<svg style="left:96px;top:84px;" width="32" height="32" viewBox="0 0 32 32"><path d="M10.60 8.80 L15.00 8.80 M9.84 10.64 L12.95 13.75 M8.00 11.40 L8.00 15.80 M6.16 10.64 L3.05 13.75 M5.40 8.80 L1.00 8.80 M6.16 6.96 L3.05 3.85 M8.00 6.20 L8.00 1.80 M9.84 6.96 L12.95 3.85 " stroke="#d6d6d6" stroke-width="1.2" fill="none"/><circle cx="8" cy="8.8" r="2.7" fill="#9a9a9a"/><path d="M17 8.4 L29.6 20.2 M14.5 15.2 L25.3 25.7 M8.3 18.3 L22 30.7" stroke="#d6d6d6" stroke-width="1.4" fill="none"/></svg>
<svg style="left:96.9px;top:131.8px;" width="30" height="22" viewBox="0 0 30 22"><path d="M0 10.6 L13.7 6 L29 14.4 L8.7 21 L0 14.2 Z" fill="#dadada"/><rect x="14.7" y="1.2" width="5.5" height="12.6" rx="2.6" ry="1.6" fill="#f39a0a"/><ellipse cx="17.45" cy="2.2" rx="2.75" ry="1.3" fill="#f39a0a" stroke="#00000030" stroke-width="0.4"/></svg>
<svg style="left:130.9px;top:131.8px;" width="30" height="22" viewBox="0 0 30 22"><path d="M0 10.6 L13.7 6 L29 14.4 L8.7 21 L0 14.2 Z" fill="#f39a0a"/><rect x="14.7" y="1.2" width="5.5" height="12.6" rx="2.6" ry="1.6" fill="#dadada"/><ellipse cx="17.45" cy="2.2" rx="2.75" ry="1.3" fill="#dadada" stroke="#00000030" stroke-width="0.4"/></svg>
<svg style="left:168.7px;top:131.8px;" width="24" height="22" viewBox="-11 -11 24 22"><circle r="9.6" fill="none" stroke="#f39a0a" stroke-width="0.9"/><path d="M2.4 -7.2 A7.6 7.6 0 1 0 7.3 2.2" fill="none" stroke="#dcdcdc" stroke-width="1.3"/><path d="M-4.6 -2.8 C-3.6 -4.4 -1.4 -4.6 -0.4 -3.4 L-1.6 -1 L-3.4 0.2 Z M-1.6 1.6 C-0.2 0.8 1.4 1.4 1.2 2.8 L-0.2 6 L-1.2 3.6 Z M2 -4.6 L3.4 -4 L3 -2.6 Z M4.4 0.6 L5.4 1.8 L4.4 2.6 Z" fill="#dcdcdc"/><circle cx="7.2" cy="-3.8" r="3" fill="#383b40"/><path d="M9.60 -2.81 L11.27 -2.12 M8.19 -1.40 L8.88 0.27 M6.21 -1.40 L5.52 0.27 M4.80 -2.81 L3.13 -2.12 M4.80 -4.79 L3.13 -5.48 M6.21 -6.20 L5.52 -7.87 M8.19 -6.20 L8.88 -7.87 M9.60 -4.79 L11.27 -5.48 " stroke="#f39a0a" stroke-width="1.5"/><circle cx="7.2" cy="-3.8" r="2.1" fill="none" stroke="#f39a0a" stroke-width="1.1"/></svg>
<svg style="left:130px;top:208.4px;" width="24" height="26" viewBox="-12 -12 24 26"><defs><radialGradient id="gsg" cx="0.38" cy="0.3" r="0.8"><stop offset="0" stop-color="#f4f4f4"/><stop offset="0.6" stop-color="#b4b4b4"/><stop offset="1" stop-color="#6c6c6c"/></radialGradient><radialGradient id="gss" cx="0.5" cy="0.5" r="0.5"><stop offset="0" stop-color="#000" stop-opacity="0.55"/><stop offset="1" stop-color="#000" stop-opacity="0"/></radialGradient><clipPath id="gsc"><circle r="9.9"/></clipPath></defs><ellipse cx="0" cy="10.6" rx="10" ry="3" fill="url(#gss)"/><circle r="9.9" fill="url(#gsg)"/><g clip-path="url(#gsc)"><path d="M-9.6 -4.8 Q0 -9.6 9.6 -3.8" fill="none" stroke="#55585c" stroke-width="0.8"/><path d="M-9.6 -1.4000000000000001 Q0 -6.2 9.6 -0.3999999999999999" fill="none" stroke="#55585c" stroke-width="0.8"/><path d="M-9.6 2.2 Q0 -2.6 9.6 3.2" fill="none" stroke="#55585c" stroke-width="0.8"/><path d="M-9.6 5.8 Q0 0.9999999999999996 9.6 6.8" fill="none" stroke="#55585c" stroke-width="0.8"/><path d="M-3.2800000000000002 -9.8 Q-8.399999999999999 0 -2.36 9.8" fill="none" stroke="#55585c" stroke-width="0.8"/><path d="M-2.08 -9.8 Q-2.4000000000000004 0 0.040000000000000036 9.8" fill="none" stroke="#55585c" stroke-width="0.8"/><path d="M-0.8200000000000001 -9.8 Q3.9000000000000004 0 2.56 9.8" fill="none" stroke="#55585c" stroke-width="0.8"/><path d="M0.31999999999999984 -9.8 Q9.600000000000001 0 4.84 9.8" fill="none" stroke="#55585c" stroke-width="0.8"/></g></svg>
<svg style="left:161.3px;top:212px;" width="28" height="21" viewBox="-19 -11 28 21"><path d="M-17.8 -2.8 H-9 M-16.4 0.6 H-8.6 M-14.4 4 H-8" stroke="#c8c8c8" stroke-width="1.3"/><rect x="-2" y="-10.4" width="4" height="2.2" fill="#c8c8c8"/><path d="M-6.4 -8.2 L-5 -6.8 M6.4 -8.2 L5 -6.8" stroke="#c8c8c8" stroke-width="1.3"/><circle r="7.4" fill="#6b6e73" stroke="#d4d4d4" stroke-width="1.6"/><path d="M-2.4 5 L4.4 -3.6 L0.2 5.6 Z" fill="#f39a0a"/></svg>
<svg style="left:140px;top:245px;" width="32" height="32" viewBox="0 0 32 32"><rect width="32" height="32" fill="#000"/><path d="M8 5.5 L31.5 6" stroke="#1e1e1e" stroke-width="1"/><path d="M8.4 5.5 L2.2 25" stroke="#3c3c3c" stroke-width="2.2"/><path d="M0 24.6 H9.6 L10.4 27.2 H0 Z" fill="#f2f2f2"/><path d="M10.2 27 L13.6 14.9 L28.4 14.6" fill="none" stroke="#b0b0b0" stroke-width="0.8"/><path d="M31.3 6.6 L28 14.6" stroke="#808080" stroke-width="2"/></svg>
<svg style="left:174px;top:245px;" width="32" height="32" viewBox="0 0 32 32"><defs><radialGradient id="obg" cx="0.45" cy="0.35" r="0.7"><stop offset="0" stop-color="#ff9a0a"/><stop offset="0.55" stop-color="#f78f00"/><stop offset="0.85" stop-color="#e27d00"/><stop offset="1" stop-color="#f6a94a"/></radialGradient><linearGradient id="obt" x1="0" y1="0" x2="0" y2="1"><stop offset="0" stop-color="#c96d00"/><stop offset="0.4" stop-color="#c96d00" stop-opacity="0"/></linearGradient></defs><rect x="0" y="0" width="4" height="4" fill="#000"/><rect x="0" y="8" width="4" height="4" fill="#000"/><rect x="0" y="16" width="4" height="4" fill="#000"/><rect x="0" y="24" width="4" height="4" fill="#000"/><rect x="4" y="4" width="4" height="4" fill="#000"/><rect x="4" y="12" width="4" height="4" fill="#000"/><rect x="4" y="20" width="4" height="4" fill="#000"/><rect x="4" y="28" width="4" height="4" fill="#000"/><rect x="8" y="0" width="4" height="4" fill="#000"/><rect x="8" y="8" width="4" height="4" fill="#000"/><rect x="8" y="16" width="4" height="4" fill="#000"/><rect x="8" y="24" width="4" height="4" fill="#000"/><rect x="12" y="4" width="4" height="4" fill="#000"/><rect x="12" y="12" width="4" height="4" fill="#000"/><rect x="12" y="20" width="4" height="4" fill="#000"/><rect x="12" y="28" width="4" height="4" fill="#000"/><rect x="16" y="0" width="4" height="4" fill="#000"/><rect x="16" y="8" width="4" height="4" fill="#000"/><rect x="16" y="16" width="4" height="4" fill="#000"/><rect x="16" y="24" width="4" height="4" fill="#000"/><rect x="20" y="4" width="4" height="4" fill="#000"/><rect x="20" y="12" width="4" height="4" fill="#000"/><rect x="20" y="20" width="4" height="4" fill="#000"/><rect x="20" y="28" width="4" height="4" fill="#000"/><rect x="24" y="0" width="4" height="4" fill="#000"/><rect x="24" y="8" width="4" height="4" fill="#000"/><rect x="24" y="16" width="4" height="4" fill="#000"/><rect x="24" y="24" width="4" height="4" fill="#000"/><rect x="28" y="4" width="4" height="4" fill="#000"/><rect x="28" y="12" width="4" height="4" fill="#000"/><rect x="28" y="20" width="4" height="4" fill="#000"/><rect x="28" y="28" width="4" height="4" fill="#000"/><circle cx="16.1" cy="16" r="13.8" fill="url(#obg)"/><circle cx="16.1" cy="16" r="13.8" fill="url(#obt)"/><path d="M3.6 11 C5 7.6 7 6.4 9.4 7.2 L16 13.4 L8 9.2 C6 8.6 4.6 9.6 3.6 11 Z" fill="#fff3c0"/><path d="M16.6 3.8 C19.6 3.4 22.6 4.8 23.6 7 C21.6 5.8 19 5.2 16.6 3.8 Z" fill="#fff0d0"/><rect x="17.4" y="8.2" width="1.6" height="1.6" fill="#ffc000"/><path d="M6 24 A12 12 0 0 0 24 26" fill="none" stroke="#ffc070" stroke-width="1.2" opacity="0.7"/></svg>
<svg style="left:155px;top:285px;" width="32" height="32" viewBox="0 0 32 32"><rect width="32" height="32" fill="#000"/><path d="M6.8 5 H31.6 L29.4 14.3 L12.9 14.9 L9 27.5 H0 Z" fill="none" stroke="#3e3e3e" stroke-width="0.7"/></svg>
<svg style="left:170px;top:325px;" width="32" height="32" viewBox="0 0 32 32"><rect width="32" height="32" fill="#000"/><path d="M7.3 5.1 H32 L30.4 14.2 L13.3 14.5 L8.4 26.9 H0 V24.7 Z" fill="#a9a9a9"/></svg>
<svg style="left:155px;top:365px;" width="32" height="32" viewBox="0 0 32 32"><rect width="32" height="32" fill="#000"/><path d="M6.8 5 H31.6 L29.4 14.3 L12.9 14.9 L9 27.5 H0 Z" fill="none" stroke="#3e3e3e" stroke-width="0.7"/></svg>
<svg style="left:170px;top:405px;" width="32" height="32" viewBox="0 0 32 32"><rect width="32" height="32" fill="#000"/><path d="M7.3 5.1 H32 L30.4 14.2 L13.3 14.5 L8.4 26.9 H0 V24.7 Z" fill="#a9a9a9"/></svg>
<svg style="left:140px;top:445px;" width="32" height="32" viewBox="0 0 32 32"><defs><linearGradient id="erg1" x1="0" y1="1" x2="1" y2="0"><stop offset="0" stop-color="#fff"/><stop offset="0.5" stop-color="#9a9a9a"/><stop offset="1" stop-color="#2a2a2a"/></linearGradient><linearGradient id="erg2" x1="0.4" y1="0" x2="0.2" y2="1"><stop offset="0" stop-color="#fff"/><stop offset="0.6" stop-color="#777"/><stop offset="1" stop-color="#333"/></linearGradient><clipPath id="erc"><rect width="32" height="32"/></clipPath></defs><rect width="32" height="32" fill="#000"/><g clip-path="url(#erc)"><path d="M1.6 16.4 A14.4 14.6 0 0 0 30.2 18 L30.4 8" fill="none" stroke="url(#erg1)" stroke-width="3.6"/><path d="M16 7.6 A7.6 7.6 0 1 1 8.6 17.4" fill="none" stroke="url(#erg2)" stroke-width="2"/><path d="M18.6 0.5 L16 7" stroke="#555" stroke-width="0.7"/></g></svg>
<svg style="left:174px;top:445px;" width="32" height="32" viewBox="0 0 32 32"><defs><radialGradient id="dbg" cx="0.5" cy="0.6" r="0.6"><stop offset="0" stop-color="#3c3c3c"/><stop offset="0.7" stop-color="#2c2c2c"/><stop offset="1" stop-color="#161616"/></radialGradient></defs><circle cx="16" cy="16" r="13.6" fill="url(#dbg)"/><path d="M4.6 12.4 A12.4 12.4 0 0 1 27.2 11.4 A14 10 0 0 0 4.6 12.4 Z" fill="#d0d0d0" opacity="0.85"/><path d="M5 9 A13 13 0 0 1 27 9" fill="none" stroke="#555" stroke-width="1.6" opacity="0.7"/><circle cx="21.4" cy="10.6" r="1.3" fill="#fff"/></svg>
<svg style="left:155px;top:485px;" width="32" height="32" viewBox="0 0 32 32"><defs><clipPath id="rrc155485"><rect width="32" height="32"/></clipPath></defs><rect width="32" height="32" fill="#000"/><g clip-path="url(#rrc155485)"><circle cx="15.5" cy="16" r="16.4" fill="none" stroke="#343434" stroke-width="0.7"/><path d="M18 1 C24 6 26 14 22 21 M7 14 A8.6 8.6 0 0 0 21 22" fill="none" stroke="#2e2e2e" stroke-width="0.7" stroke-dasharray="3 1.5"/></g></svg>
<svg style="left:170px;top:525px;" width="32" height="32" viewBox="0 0 32 32"><defs><clipPath id="crc170525"><rect width="32" height="32"/></clipPath></defs><rect width="32" height="32" fill="#000"/><g clip-path="url(#crc170525)"><path d="M17.81 -0.44 A16.6 16.6 0 1 1 -1.10 16.00 L6.70 16.00 A8.8 8.8 0 1 0 16.12 8.29 Z" fill="#a3a3a3"/></g></svg>
<svg style="left:155px;top:565px;" width="32" height="32" viewBox="0 0 32 32"><defs><clipPath id="rrc155565"><rect width="32" height="32"/></clipPath></defs><rect width="32" height="32" fill="#000"/><g clip-path="url(#rrc155565)"><circle cx="15.5" cy="16" r="16.4" fill="none" stroke="#343434" stroke-width="0.7"/><path d="M18 1 C24 6 26 14 22 21 M7 14 A8.6 8.6 0 0 0 21 22" fill="none" stroke="#2e2e2e" stroke-width="0.7" stroke-dasharray="3 1.5"/></g></svg>
<svg style="left:170px;top:605px;" width="32" height="32" viewBox="0 0 32 32"><defs><clipPath id="crc170605"><rect width="32" height="32"/></clipPath></defs><rect width="32" height="32" fill="#000"/><g clip-path="url(#crc170605)"><path d="M17.81 -0.44 A16.6 16.6 0 1 1 -1.10 16.00 L6.70 16.00 A8.8 8.8 0 1 0 16.12 8.29 Z" fill="#a3a3a3"/></g></svg>
<svg style="left:5px;top:696px;" width="17" height="17" viewBox="0 0 17 17"><path d="M3 3.6 A6 6 0 1 1 10.6 12.4" fill="none" stroke="#70747a" stroke-width="1.7"/><path d="M0 0.4 V6.6 H6.2 Z" fill="#70747a"/><circle cx="9.6" cy="15.4" r="1.2" fill="#70747a"/></svg>
<svg style="left:30px;top:696px;" width="17" height="17" viewBox="0 0 17 17"><path d="M14 3.6 A6 6 0 1 0 6.4 12.4" fill="none" stroke="#70747a" stroke-width="1.7"/><path d="M17 0.4 V6.6 H10.8 Z" fill="#70747a"/><circle cx="7.4" cy="15.4" r="1.2" fill="#70747a"/></svg>
<svg style="left:55px;top:696px;" width="17" height="17" viewBox="0 0 17 17"><path d="M0 0 H13.6 L17 3.4 V17 H0 Z" fill="#d8d8d8"/><rect x="2.6" y="8.6" width="11.8" height="6.4" fill="#383b40"/><rect x="9.6" y="1" width="2.2" height="3.8" fill="#383b40"/></svg>
<svg style="left:80px;top:696px;" width="17.5" height="17.5" viewBox="0 0 17.5 17.5"><path d="M5.4 5 H15 L17.5 7.6 V17.5 H5.4 Z" fill="none" stroke="#d8d8d8" stroke-width="1.2"/><path d="M0 0 H10.6 L13.4 2.8 V13.4 H0 Z" fill="#d8d8d8" stroke="#383b40" stroke-width="0.8"/><rect x="2" y="6.6" width="9.2" height="4.8" fill="#383b40"/><rect x="7.4" y="0.8" width="1.8" height="3" fill="#383b40"/></svg>
<svg style="left:107px;top:698.4px;" width="13" height="12.4" viewBox="0 0 13 12.4"><path d="M0.6 0.6 L12.4 11.8 M12.4 0.6 L0.6 11.8" stroke="#d8d8d8" stroke-width="1.5"/></svg>
<svg style="left:130px;top:699px;will-change:transform;" width="18" height="14" viewBox="0 0 18 14"><path d="M3 8 C4 2.4 10 0.8 14 4.6" fill="none" stroke="#d8d8d8" stroke-width="1.6"/><path d="M16.4 1 V7.2 H10.2 Z" fill="#d8d8d8"/><circle cx="2.8" cy="9.6" r="2.4" fill="#d8d8d8"/><text x="13.4" y="13.6" font-size="6.6" font-weight="700" fill="#d8d8d8" text-anchor="middle" font-family="Liberation Sans, sans-serif">HC</text></svg>
<svg style="left:372.6px;top:694.6px;" width="15.4" height="18.4" viewBox="0 0 15.4 18.4"><path d="M0 2.6 H15.4 V4.6 H0 Z M4.6 0.4 H10.8 V2.6 H4.6 Z M1.4 5.6 H14 L12.8 18.4 H2.6 Z" fill="#b4b4b4"/></svg>
<div style="left:402px;top:27px;width:87px;height:24px;background:#212429;"></div>
<div style="left:410.00px;top:29.00px;height:20px;line-height:20px;font-size:12.5px;color:#e4e4e4;white-space:pre;letter-spacing:-0.132px;">Scene Editor</div>
<svg style="left:1382px;top:30.6px;will-change:transform;" width="18" height="18" viewBox="0 0 18 18"><circle cx="9" cy="9" r="8.2" fill="none" stroke="#dedede" stroke-width="1"/><text x="9" y="13.2" font-size="12" font-weight="700" fill="#dedede" text-anchor="middle" font-family="Liberation Sans, sans-serif">?</text></svg><svg style="left:1410px;top:33.6px;" width="12" height="12" viewBox="0 0 12 12"><path d="M0.4 3.8 V0.4 H3.8 M8.2 0.4 H11.6 V3.8 M11.6 8.2 V11.6 H8.2 M3.8 11.6 H0.4 V8.2" fill="none" stroke="#dedede" stroke-width="1.4"/><path d="M0.8 0.8 L4.4 4.4 M11.2 0.8 L7.6 4.4 M11.2 11.2 L7.6 7.6 M0.8 11.2 L4.4 7.6" stroke="#dedede" stroke-width="1.4"/></svg><svg style="left:1435.3px;top:34.4px;" width="10.4" height="10.4" viewBox="0 0 10.4 10.4"><path d="M0.9 0.9 L9.5 9.5 M9.5 0.9 L0.9 9.5" stroke="#dedede" stroke-width="2.5"/></svg>
<div style="left:402px;top:52px;width:31px;height:668px;background:#383b40;"></div>
<div style="left:402px;top:52px;width:1px;height:668px;background:#2c2f34;"></div>
<div style="left:433px;top:51px;width:1020px;height:634px;background:#212429;"></div>
<div style="left:435px;top:83px;width:1013px;height:570px;background:#000;"></div>
<svg style="left:435px;top:83px" width="1014" height="570" viewBox="435 83 1014 570"><defs><linearGradient id="floorg" gradientUnits="userSpaceOnUse" x1="700" y1="503" x2="707.8" y2="653"><stop offset="0" stop-color="#494949"/><stop offset="0.12" stop-color="#424242"/><stop offset="0.33" stop-color="#363636"/><stop offset="0.66" stop-color="#2a2a2a"/><stop offset="1" stop-color="#212121"/></linearGradient><linearGradient id="floorg2" gradientUnits="userSpaceOnUse" x1="1200" y1="509" x2="1185.3" y2="659"><stop offset="0" stop-color="#494949"/><stop offset="0.12" stop-color="#424242"/><stop offset="0.33" stop-color="#363636"/><stop offset="0.66" stop-color="#2a2a2a"/><stop offset="1" stop-color="#212121"/></linearGradient><linearGradient id="floorh" x1="0" y1="0" x2="1" y2="0"><stop offset="0" stop-color="#000" stop-opacity="0.14"/><stop offset="0.5" stop-color="#000" stop-opacity="0.06"/><stop offset="1" stop-color="#000" stop-opacity="0"/></linearGradient><radialGradient id="shad" cx="0.5" cy="0.5" r="0.5"><stop offset="0" stop-color="#0a0a0a" stop-opacity="0.9"/><stop offset="0.35" stop-color="#0b0b0b" stop-opacity="0.75"/><stop offset="0.7" stop-color="#0e0e0e" stop-opacity="0.3"/><stop offset="1" stop-color="#111" stop-opacity="0"/></radialGradient><linearGradient id="rimg" x1="0" y1="0" x2="0" y2="1"><stop offset="0" stop-color="#272727"/><stop offset="0.22" stop-color="#343434"/><stop offset="0.45" stop-color="#4a4a4a"/><stop offset="0.72" stop-color="#3e3e3e"/><stop offset="1" stop-color="#343434"/></linearGradient><linearGradient id="frontg" x1="0" y1="0" x2="1" y2="1"><stop offset="0" stop-color="#2b2b2b"/><stop offset="1" stop-color="#242424"/></linearGradient><linearGradient id="inng" gradientUnits="userSpaceOnUse" x1="900" y1="421" x2="906" y2="506"><stop offset="0" stop-color="#2b2b2b"/><stop offset="0.07" stop-color="#2f2f2f"/><stop offset="0.235" stop-color="#5a5a5a"/><stop offset="0.41" stop-color="#343434"/><stop offset="0.53" stop-color="#2e2e2e"/><stop offset="0.67" stop-color="#404040"/><stop offset="0.81" stop-color="#2c2c2c"/><stop offset="1" stop-color="#232323"/></linearGradient><linearGradient id="underg" gradientUnits="userSpaceOnUse" x1="1000" y1="258" x2="1060" y2="205"><stop offset="0" stop-color="#c96a1e"/><stop offset="0.5" stop-color="#f29a55"/><stop offset="1" stop-color="#f6a25c"/></linearGradient><linearGradient id="stemg" gradientUnits="userSpaceOnUse" x1="950" y1="300" x2="1000" y2="300"><stop offset="0" stop-color="#ee8a1b"/><stop offset="0.5" stop-color="#dc7c17"/><stop offset="1" stop-color="#c46c12"/></linearGradient><clipPath id="clipscene"><rect x="435" y="83" width="1013" height="570"/></clipPath></defs><g clip-path="url(#clipscene)"><clipPath id="fl"><rect x="435" y="400" width="551" height="260"/></clipPath><clipPath id="fr"><rect x="985" y="400" width="470" height="260"/></clipPath><path d="M435 516.6 L836 496 Q985 488 1129 496.8 L1449 533.5 L1449 653 L435 653 Z" fill="url(#floorg)" clip-path="url(#fl)"/><path d="M435 516.6 L836 496 Q985 488 1129 496.8 L1449 533.5 L1449 653 L435 653 Z" fill="url(#floorg2)" clip-path="url(#fr)"/><path d="M435 516.6 L836 496 Q985 488 1129 496.8 L1449 533.5 L1449 653 L435 653 Z" fill="url(#floorh)"/><ellipse cx="952" cy="604" rx="135" ry="30" fill="url(#shad)" transform="rotate(11 952 604)"/><path d="M985 263 C988.6 264.1 997.9 266.7 1006.9 269.7 C1015.9 272.7 1029.5 277.2 1039.0 280.9 C1048.5 284.6 1055.5 287.5 1063.8 292.0 C1072.1 296.5 1081.2 302.3 1088.6 308.1 C1096.0 313.9 1102.6 319.9 1108.4 326.7 C1114.2 333.5 1119.2 342.0 1123.3 349.0 C1127.4 356.0 1130.5 362.2 1133.2 368.8 C1135.9 375.4 1138.0 382.0 1139.4 388.6 C1140.9 395.2 1141.4 403.2 1141.9 408.4 C1142.4 413.6 1142.2 414.9 1142.2 420.0 C1142.2 425.1 1142.6 430.9 1141.6 438.9 C1140.6 446.9 1138.7 458.2 1136.4 467.8 C1134.1 477.4 1131.6 487.5 1127.7 496.6 C1123.8 505.7 1118.6 514.9 1113.3 522.6 C1108.0 530.3 1102.3 537.1 1096.0 542.9 C1089.7 548.7 1083.4 552.7 1075.7 557.3 C1068.0 561.9 1058.4 566.7 1049.7 570.3 C1041.0 573.9 1031.0 576.8 1023.8 579.0 C1016.6 581.2 1012.0 581.8 1006.4 583.3 C1000.8 584.8 992.7 587.2 990.0 588.0 L986.0 591.0 L993.7 589.1 L1001.4 586.6 L1008.8 583.5 L1016.2 580.0 L1023.3 575.9 L1030.2 571.4 L1037.0 566.4 L1043.4 560.9 L1049.6 554.9 L1055.5 548.5 L1061.1 541.7 L1066.3 534.6 L1071.2 527.0 L1075.7 519.2 L1079.8 511.0 L1083.6 502.6 L1086.9 493.9 L1089.8 484.9 L1092.3 475.8 L1094.3 466.6 L1095.9 457.2 L1097.1 447.7 L1097.8 438.1 L1098.0 428.5 L1097.8 418.9 L1097.1 409.3 L1095.9 399.8 L1094.3 390.4 L1092.3 381.2 L1089.8 372.1 L1086.9 363.1 L1083.6 354.4 L1079.8 346.0 L1075.7 337.8 L1071.2 330.0 L1066.3 322.4 L1061.1 315.3 L1055.5 308.5 L1049.6 302.1 L1043.4 296.1 L1037.0 290.6 L1030.2 285.6 L1023.3 281.1 L1016.2 277.0 L1008.8 273.5 L1001.4 270.4 L993.7 267.9 L986.0 266.0 Z" fill="url(#rimg)"/><path d="M969.7 261.2 L982.4 265.3 L990.1 267.0 L997.8 269.2 L1005.3 272.0 L1012.7 275.3 L1020.0 279.1 L1027.0 283.4 L1033.8 288.2 L1040.4 293.5 L1046.7 299.2 L1052.7 305.4 L1058.4 312.0 L1063.8 319.0 L1068.9 326.3 L1073.6 334.0 L1077.9 342.0 L1081.8 350.4 L1085.4 358.9 L1088.5 367.7 L1091.2 376.8 L1093.4 386.0 L1095.2 395.3 L1096.6 404.7 L1097.5 414.3 L1097.9 423.8 L1097.9 433.4 L1097.5 443.0 L1096.6 452.5 L1095.2 462.0 L1093.4 471.3 L1091.1 480.5 L1088.4 489.5 L1085.3 498.3 L1081.7 506.9 L1077.8 515.2 L1073.5 523.2 L1068.8 530.9 L1063.7 538.2 L1058.3 545.2 L1052.6 551.8 L1046.5 558.0 L1040.2 563.7 L1033.6 568.9 L1026.8 573.7 L1019.8 578.0 L1012.5 581.8 L1005.1 585.1 L997.6 587.9 L989.9 590.1 L982.1 591.8 L974.3 592.9 L966.5 593.4 L958.6 593.4 L950.7 592.9 L942.9 591.8 L935.1 590.1 L927.5 587.9 L919.9 585.1 L912.5 581.9 L905.3 578.1 L898.2 573.8 L891.4 569.0 L884.8 563.7 L878.5 558.0 L872.5 551.8 L866.7 545.2 L861.3 538.3 L856.3 530.9 L851.6 523.2 L847.2 515.2 L843.3 506.9 L839.7 498.4 L836.6 489.6 L833.9 480.5 L831.7 471.4 L829.8 462.0 L828.5 452.6 L827.5 443.1 L827.1 433.5 L827.1 423.9 L880.1 420.9 L880.0 425.8 L880.2 430.7 L880.6 435.5 L881.3 440.3 L882.1 445.0 L883.3 449.7 L884.6 454.3 L886.2 458.7 L887.9 463.1 L889.9 467.3 L892.1 471.4 L894.5 475.3 L897.0 479.0 L899.8 482.5 L902.7 485.8 L905.7 488.9 L908.9 491.8 L912.3 494.4 L915.7 496.8 L919.3 498.9 L923.0 500.7 L926.7 502.3 L930.6 503.6 L934.4 504.6 L938.4 505.4 L942.3 505.8 L946.3 506.0 L950.2 505.9 L954.2 505.5 L958.1 504.7 L962.0 503.8 L965.8 502.5 L969.6 500.9 L973.3 499.1 L976.9 497.0 L980.3 494.7 L983.7 492.1 L986.9 489.2 L990.0 486.2 L992.9 482.9 L995.7 479.4 L998.2 475.7 L1000.6 471.8 L1002.8 467.8 L1004.9 463.6 L1006.7 459.2 L1008.2 454.8 L1009.6 450.2 L1010.7 445.6 L1011.7 440.8 L1012.3 436.0 L1012.8 431.2 L1013.0 426.4 L1013.0 421.5 L1012.7 416.6 L1012.2 411.8 L1011.5 407.0 L1010.5 402.3 L1009.3 397.7 L1007.9 393.1 L1006.2 388.7 L1004.4 384.4 L1002.3 380.3 L1000.1 376.3 L997.7 372.4 L995.0 368.8 L992.2 365.3 L989.3 362.1 L986.2 359.1 L982.9 356.3 L979.5 353.8 L976.0 351.5 L972.4 349.4 L968.7 347.7 L964.9 346.2 L961.1 345.0 L957.2 344.1 L953.3 343.4 L949.3 343.1 L945.3 343.0 Z" fill="url(#frontg)"/><path d="M880.0 421.4 L880.0 422.6 L880.0 423.7 L880.0 424.9 L880.0 426.0 L880.0 427.2 L880.1 428.3 L880.1 429.5 L880.2 430.7 L880.3 431.8 L880.4 433.0 L880.5 434.1 L880.6 435.3 L880.7 436.4 L880.9 437.6 L881.0 438.7 L881.2 439.8 L881.4 441.0 L881.6 442.1 L881.8 443.2 L882.0 444.4 L882.2 445.5 L882.5 446.6 L882.8 447.7 L883.0 448.8 L883.3 449.9 L883.6 451.0 L883.9 452.1 L884.3 453.2 L884.6 454.3 L885.0 455.4 L885.3 456.4 L885.7 457.5 L886.1 458.6 L886.5 459.6 L886.9 460.7 L887.3 461.7 L887.8 462.7 L888.2 463.7 L888.7 464.8 L889.2 465.8 L889.6 466.8 L890.1 467.7 L890.6 468.7 L891.2 469.7 L891.7 470.7 L892.2 471.6 L892.8 472.5 L893.3 473.5 L893.9 474.4 L894.5 475.3 L895.1 476.2 L895.7 477.1 L896.3 478.0 L896.9 478.8 L897.6 479.7 L898.2 480.6 L898.9 481.4 L899.5 482.2 L900.2 483.0 L900.9 483.8 L901.6 484.6 L902.3 485.4 L903.0 486.2 L903.7 486.9 L904.5 487.6 L905.2 488.4 L905.9 489.1 L906.7 489.8 L907.5 490.5 L908.2 491.2 L909.0 491.8 L909.8 492.5 L910.6 493.1 L911.4 493.7 L912.2 494.3 L913.0 494.9 L913.8 495.5 L914.7 496.0 L915.5 496.6 L916.3 497.1 L917.2 497.6 L918.0 498.1 L918.9 498.6 L919.7 499.1 L920.6 499.6 L921.5 500.0 L922.4 500.4 L923.2 500.9 L924.1 501.3 L925.0 501.6 L925.9 502.0 L926.8 502.4 L927.7 502.7 L928.6 503.0 L929.6 503.3 L930.5 503.6 L931.4 503.9 L932.3 504.1 L933.2 504.4 L934.2 504.6 L935.1 504.8 L936.0 505.0 L937.0 505.2 L937.9 505.3 L938.8 505.5 L939.8 505.6 L940.7 505.7 L941.7 505.8 L942.6 505.9 L943.6 505.9 L944.5 506.0 L945.4 506.0 L946.4 506.0 L947.3 506.0 L948.3 506.0 L949.2 505.9 L950.2 505.9 L951.1 505.8 L952.1 505.7 L953.0 505.6 L953.9 505.5 L954.9 505.3 L955.8 505.2 L956.8 505.0 L957.7 504.8 L958.6 504.6 L959.6 504.4 L960.5 504.2 L961.4 503.9 L962.3 503.7 L963.2 503.4 L964.2 503.1 L965.1 502.8 L966.0 502.4 L966.9 502.1 L967.8 501.7 L968.7 501.3 L969.6 500.9 L970.4 500.5 L971.3 500.1 L972.2 499.7 L973.1 499.2 L973.9 498.7 L974.8 498.3 L975.6 497.8 L976.5 497.2 L977.3 496.7 L978.2 496.2 L979.0 495.6 L979.8 495.0 L979.6 494.6 L978.9 494.3 L978.3 494.0 L977.6 493.6 L976.9 493.3 L976.2 492.9 L975.6 492.5 L974.9 492.1 L974.2 491.7 L973.6 491.3 L972.9 490.9 L972.3 490.5 L971.6 490.0 L971.0 489.6 L970.3 489.1 L969.7 488.6 L969.1 488.1 L968.4 487.6 L967.8 487.1 L967.2 486.6 L966.6 486.1 L966.0 485.6 L965.4 485.0 L964.8 484.5 L964.2 483.9 L963.6 483.3 L963.0 482.7 L962.5 482.1 L961.9 481.5 L961.3 480.9 L960.8 480.3 L960.2 479.7 L959.7 479.0 L959.1 478.4 L958.6 477.7 L958.0 477.0 L957.5 476.4 L957.0 475.7 L956.5 475.0 L956.0 474.3 L955.5 473.6 L955.0 472.8 L954.5 472.1 L954.0 471.4 L953.6 470.6 L953.1 469.9 L952.6 469.1 L952.2 468.4 L951.7 467.6 L951.3 466.8 L950.9 466.0 L950.4 465.2 L950.0 464.4 L949.6 463.6 L949.2 462.8 L948.8 462.0 L948.4 461.2 L948.1 460.3 L947.7 459.5 L947.3 458.6 L947.0 457.8 L946.6 456.9 L946.3 456.1 L945.9 455.2 L945.6 454.3 L945.3 453.4 L945.0 452.6 L944.7 451.7 L944.4 450.8 L944.1 449.9 L943.8 449.0 L943.6 448.1 L943.3 447.1 L943.1 446.2 L942.8 445.3 L942.6 444.4 L942.3 443.5 L942.1 442.5 L941.9 441.6 L941.7 440.6 L941.5 439.7 L941.3 438.8 L941.2 437.8 L941.0 436.9 L940.8 435.9 L940.7 434.9 L940.6 434.0 L940.4 433.0 L940.3 432.1 L940.2 431.1 L940.1 430.1 L940.0 429.2 L939.9 428.2 L939.8 427.2 L939.7 426.3 L939.7 425.3 L939.6 424.3 L939.6 423.3 L939.6 422.4 Z" fill="url(#inng)"/><clipPath id="fi"><ellipse cx="946.5" cy="424.5" rx="66.5" ry="81.5"/></clipPath><clipPath id="bi"><ellipse cx="999" cy="419" rx="59.5" ry="80"/></clipPath><g clip-path="url(#fi)"><g clip-path="url(#bi)"><path d="M435 516.6 L836 496 Q985 488 1129 496.8 L1449 533.5 L1449 653 L435 653 Z" fill="url(#floorg)"/></g></g><path d="M880.0 427.3 L880.4 432.9 L881.0 438.5 L881.9 443.9 L883.2 449.3 L884.7 454.6 L886.5 459.7 L888.6 464.7 L891.0 469.4 L893.7 474.0 L896.6 478.3 L899.7 482.4 L903.0 486.2 L906.6 489.7 L910.3 492.9 L914.3 495.8 L918.3 498.3 L922.5 500.5 L926.8 502.4 L931.2 503.8 L935.7 504.9 L940.2 505.6 L944.8 506.0 L949.4 505.9 L953.9 505.5 L958.4 504.7 L962.9 503.5 L967.3 501.9 L971.6 500.0 L975.7 497.7 L979.8 495.1" fill="none" stroke="#8a8a8a" stroke-width="0.7" opacity="0.45"/><path d="M1017.6 277.8 L1024.2 281.6 L1030.6 285.8 L1036.8 290.5 L1042.8 295.6 L1048.5 301.0 L1054.0 306.8 L1059.3 313.0 L1064.2 319.5 L1068.9 326.3 L1073.3 333.5 L1077.3 340.9 L1081.0 348.5 L1084.4 356.4 L1087.4 364.5 L1090.0 372.7 L1092.3 381.2 L1094.2 389.7 L1095.7 398.4 L1096.9 407.2 L1097.6 416.0 L1098.0 424.9 L1097.9 433.8 L1097.5 442.6 L1096.7 451.5" fill="none" stroke="#6a6a6a" stroke-width="0.9" opacity="0.8"/><path d="M910.8 165.4 L1116 112.5 L1156.4 153.6 L1129.6 239.4 L1007.3 257.3 L999 265.5 L969 262 L944.2 344.9 L975 352 L914.7 358.2 L854.3 348.5 Z" fill="#f29427"/><path d="M953.7 235.1 L1083.8 207.3 L1129.6 239.4 L1007.3 257.3 Z" fill="url(#underg)"/><path d="M953.7 235.1 L1007.3 257.3 L999 265.5 L969 262 L944.2 344.9 L943.7 344.9 Z" fill="url(#stemg)"/><path d="M969.5 261.5 L990 264.8 L982 267 L968.5 265 Z" fill="#5d666b"/><path d="M854.3 348.5 L943.7 342.2 L975 352 L914.7 358.2 Z" fill="#f5a057"/><path d="M1116 112.5 L1156.4 153.6 L1129.6 239.4 L1083.8 207.3 Z" fill="#f29427"/><path d="M910.8 165.4 L1116 112.5 L1083.8 207.3 L953.7 235.1 L943.7 344.9 L854.3 348.5 Z" fill="#f6921e"/></g></svg>
<svg style="left:435px;top:560px" width="100" height="93" viewBox="435 560 100 93"><circle cx="453" cy="605.7" r="7" fill="#7a1a30"/><circle cx="497.7" cy="605" r="6.6" fill="#1a4a85"/><circle cx="479.5" cy="640" r="7.3" fill="#3d6b00"/><path d="M480 608.5 V580" stroke="#80d318" stroke-width="1.8"/><path d="M479.5 608.6 L462 609.8" stroke="#2e8bf5" stroke-width="1.6"/><path d="M480 608.4 L506 609.8" stroke="#f5325a" stroke-width="1.6"/><circle cx="480.5" cy="576" r="7.8" fill="#80d318"/><circle cx="461.7" cy="609.7" r="7.6" fill="#2e8bf5"/><circle cx="506.3" cy="609.7" r="7.6" fill="#f5325a"/><text x="480.6" y="578.6" font-family="Liberation Sans, sans-serif" text-anchor="middle" fill="#111" font-size="13">y</text><text x="461.8" y="613.6" font-family="Liberation Sans, sans-serif" text-anchor="middle" fill="#111" font-size="13">z</text><text x="506.4" y="613.6" font-family="Liberation Sans, sans-serif" text-anchor="middle" fill="#111" font-size="13">x</text></svg>
<div style="left:414.52px;top:55.20px;height:20px;line-height:20px;font-size:12.5px;color:#e4e4e4;white-space:pre;">1</div><svg style="left:411.0px;top:82.5px;" width="15" height="12" viewBox="0 0 15 12"><path d="M1 0 H14 A1 1 0 0 1 15 1 V8.6 A1 1 0 0 1 14 9.6 H5 L3 12 V9.6 H1 A1 1 0 0 1 0 8.6 V1 A1 1 0 0 1 1 0 Z" fill="#d6d6d6"/><path d="M2 2.6 H8.4 M2 4.8 H8.4 M2 7 H6" stroke="#383b40" stroke-width="1"/><rect x="10.2" y="2" width="1.8" height="5.6" fill="#383b40"/></svg><div style="left:405.5px;top:100.8px;width:24.5px;height:22.4px;background:#1f2227;border:1px solid #3a96f0;border-radius:3px;"></div><svg style="left:409.5px;top:107px;" width="16" height="10" viewBox="0 0 16 10"><rect width="16" height="10" fill="#bdbdbd"/></svg><svg style="left:411.0px;top:330.9px;" width="15" height="15" viewBox="0 0 15 15"><path d="M0.6 4 V0.6 H4 M11 0.6 H14.4 V4 M14.4 11 V14.4 H11 M4 14.4 H0.6 V11" fill="none" stroke="#d6d6d6" stroke-width="1.2"/><path d="M3.2 5 H5.4 L6.4 3.6 H8.8 L9.8 5 H11.8 V11 H3.2 Z" fill="none" stroke="#d6d6d6" stroke-width="1.1"/><circle cx="7.5" cy="8" r="1.7" fill="none" stroke="#d6d6d6" stroke-width="1"/></svg><svg style="left:411.0px;top:356.25px;" width="15" height="12.5" viewBox="0 0 15 12.5"><path d="M0 5.6 H10.4 V12.5 H0 Z M10.4 8 L14.6 5.8 V12.2 L10.4 10 Z M1.6 2.6 H5 V5.6 H1.6 Z" fill="#d6d6d6"/><ellipse cx="9.4" cy="3.4" rx="5" ry="3.4" fill="#d6d6d6" stroke="#383b40" stroke-width="0.8"/><circle cx="9.4" cy="3.4" r="1.9" fill="#383b40"/><circle cx="9.4" cy="3.4" r="0.9" fill="#d6d6d6"/></svg><svg style="left:412.0px;top:379.25px;" width="13" height="15.5" viewBox="0 0 13 15.5"><path d="M0.6 5.6 A4.6 4.6 0 0 1 9.6 4 L8.6 8.4 L6.6 11.5 H3.6 L1.6 8.4 Z" fill="#d6d6d6"/><rect x="3.8" y="11.8" width="2.6" height="1.4" fill="#d6d6d6"/><rect x="4.4" y="13.4" width="1.4" height="2" fill="#d6d6d6"/><ellipse cx="8" cy="4" rx="5" ry="3.4" fill="#d6d6d6" stroke="#383b40" stroke-width="0.8"/><circle cx="8" cy="4" r="1.9" fill="#383b40"/><circle cx="8" cy="4" r="0.9" fill="#d6d6d6"/></svg><svg style="left:411.0px;top:403.0px;" width="15" height="15" viewBox="0 0 15 15"><circle cx="2" cy="2" r="1.9" fill="#d6d6d6"/><path d="M2 8 L6 3.8 L8.4 6.2 L10.6 4.2 L14.6 8 Z" fill="#d6d6d6"/><path d="M0 10 H15 M0 13 H15" stroke="#d6d6d6" stroke-width="1.1"/><rect x="3.4" y="8.6" width="1.8" height="2.8" fill="#d6d6d6"/><rect x="6.8" y="11.6" width="1.8" height="2.8" fill="#d6d6d6"/></svg><svg style="left:412.0px;top:427.9px;" width="13" height="13" viewBox="0 0 13 13"><rect width="13" height="13" fill="#d6d6d6"/><circle cx="6.5" cy="6.5" r="3.6" fill="#1c1c1c"/><path d="M6.5 2.9 A3.6 3.6 0 0 1 6.5 10.1 Z" fill="#d6d6d6"/><path d="M6.5 2.9 A3.6 3.6 0 0 1 6.5 10.1" fill="none" stroke="#1c1c1c" stroke-width="0.9"/><rect x="9.8" y="1.2" width="2" height="10.6" fill="#1c1c1c" opacity="0"/></svg><svg style="left:410.0px;top:451.0px;" width="17" height="15" viewBox="0 0 17 15"><path d="M4.5 2 V10 M12 5.5 V13.5 M4.5 2 L12 5.5 M4.5 10 L12 13.5 M0.5 4.5 L4.5 2 M12 5.5 L16.5 3 M0.5 12.5 L4.5 10 M12 13.5 L16.5 11" stroke="#6c6f73" stroke-width="0.9" stroke-dasharray="2.2 1.4" fill="none"/><rect x="3.2" y="0.8" width="2.6" height="2.6" fill="#6c6f73"/><rect x="10.7" y="4.2" width="2.6" height="2.6" fill="#6c6f73"/><rect x="3.2" y="8.8" width="2.6" height="2.6" fill="#6c6f73"/><rect x="10.7" y="12.2" width="2.6" height="2.6" fill="#6c6f73"/></svg><svg style="left:412.0px;top:477.1px;will-change:transform;" width="13" height="11" viewBox="0 0 13 11"><rect x="1.4" y="0" width="4" height="1.6" fill="#d6d6d6"/><rect x="7.6" y="0" width="4" height="1.6" fill="#d6d6d6"/><rect x="0" y="2.6" width="13" height="8.4" fill="#d6d6d6"/><text x="6.5" y="9.8" font-size="7.6" font-weight="700" text-anchor="middle" fill="#1c1c1c" font-family="Liberation Sans, sans-serif">HS</text></svg><svg style="left:411.0px;top:499.8px;" width="15" height="13" viewBox="0 0 15 13"><rect x="0.5" y="0.5" width="14" height="12" fill="none" stroke="#d6d6d6" stroke-width="1"/><rect x="2.7" y="2.7" width="9.6" height="7.6" fill="none" stroke="#d6d6d6" stroke-width="1.2"/><path d="M4.4 5.4 H10 M4.4 7.6 H8.6" stroke="#d6d6d6" stroke-width="1"/></svg><svg style="left:411.0px;top:524.0px;" width="15" height="13" viewBox="0 0 15 13"><rect x="0.5" y="0.5" width="14" height="12" fill="none" stroke="#d6d6d6" stroke-width="1"/><rect x="2.7" y="2.7" width="9.6" height="7.6" fill="none" stroke="#d6d6d6" stroke-width="1.2"/><path d="M7.5 4 V9 M4.6 6.5 H10.4" stroke="#d6d6d6" stroke-width="1.2"/></svg><svg style="left:412.0px;top:547.9px;" width="13" height="13" viewBox="0 0 13 13"><rect width="13" height="13" fill="#d6d6d6"/><rect x="3.2" y="1.4" width="8.6" height="10.2" fill="#161616"/><path d="M3.2 1.4 L6.4 6.5 L3.2 11.6 Z" fill="#d6d6d6"/><path d="M6.8 3.8 L11 6.5 L6.8 9.2 Z" fill="#d6d6d6"/></svg><svg style="left:411.0px;top:572.7px;" width="15" height="11.6" viewBox="0 0 15 11.6"><rect x="0.6" y="0.6" width="13.8" height="10.4" fill="none" stroke="#d6d6d6" stroke-width="1.2"/></svg><svg style="left:412.3px;top:594.0px;" width="12.4" height="17" viewBox="0 0 12.4 17"><path d="M0 6 A6.2 6.2 0 0 1 12.4 6 C12.4 9 9.4 10.4 9.2 12.6 H3.2 C3 10.4 0 9 0 6 Z" fill="#d6d6d6"/><path d="M4.2 5.4 H8.2 M6.2 5.4 V12" stroke="#6a6a6a" stroke-width="1"/><path d="M3.4 13.8 H9 M3.8 15.4 H8.6" stroke="#d6d6d6" stroke-width="1"/><path d="M4.8 16.8 H7.6" stroke="#d6d6d6" stroke-width="0.9"/></svg><div style="left:403px;top:614px;width:30px;height:24px;background:#1f2227;border:1px solid #3a96f0;border-radius:3px;"></div><svg style="left:411.0px;top:619.0px;" width="15" height="15" viewBox="0 0 15 15"><rect x="1.5" y="1.5" width="12" height="12" fill="none" stroke="#d6d6d6" stroke-width="1" stroke-dasharray="1.5 1.5"/><rect x="0" y="0" width="3" height="3" fill="#d6d6d6"/><rect x="0" y="6" width="3" height="3" fill="#d6d6d6"/><rect x="0" y="12" width="3" height="3" fill="#d6d6d6"/><rect x="6" y="0" width="3" height="3" fill="#d6d6d6"/><rect x="6.6" y="6.6" width="1.8" height="1.8" fill="#d6d6d6"/><rect x="6" y="12" width="3" height="3" fill="#d6d6d6"/><rect x="12" y="0" width="3" height="3" fill="#d6d6d6"/><rect x="12" y="6" width="3" height="3" fill="#d6d6d6"/><rect x="12" y="12" width="3" height="3" fill="#d6d6d6"/></svg><svg style="left:410.5px;top:643.0px;" width="16" height="16" viewBox="0 0 16 16"><path d="M2.4 0 V16 M0 13.4 H15.6" stroke="#d6d6d6" stroke-width="1" fill="none"/><rect x="4.4" y="5.6" width="2.8" height="6.4" fill="#d6d6d6"/><rect x="8.4" y="7.6" width="2.8" height="4.4" fill="#d6d6d6"/><rect x="12.4" y="3.4" width="2.8" height="8.6" fill="#d6d6d6"/></svg><svg style="left:411.0px;top:667.0px;" width="15" height="15" viewBox="0 0 15 15"><rect x="4" y="4" width="7" height="7" fill="#d6d6d6"/><path d="M5.2 0 V2.6 M9.8 0 V2.6 M5.2 12.4 V15 M9.8 12.4 V15 M0 5.2 H2.6 M0 9.8 H2.6 M12.4 5.2 H15 M12.4 9.8 H15" stroke="#d6d6d6" stroke-width="1.1"/></svg>
<div style="left:433px;top:685px;width:1020px;height:35px;background:#383b40;"></div>
<svg style="left:440px;top:693px;" width="6" height="20" viewBox="0 0 6 20"><rect x="0.5" y="0.5" width="4" height="4.6" fill="none" stroke="#d8d8d8" stroke-width="1"/><rect x="0" y="7" width="5" height="6" fill="#6aa9f5"/><rect x="0.5" y="14.9" width="4" height="4.6" fill="none" stroke="#d8d8d8" stroke-width="1"/></svg>
<div style="left:466.00px;top:693.80px;height:20px;line-height:20px;font-size:12.5px;color:#e4e4e4;white-space:pre;letter-spacing:0.199px;">Default</div>
<svg style="left:535px;top:695px;" width="18" height="16" viewBox="0 0 18 16"><rect x="0" y="3.6" width="18" height="12.4" fill="#d8d8d8"/><path d="M0 3.6 V0 H18 V3.6 Z" fill="#d8d8d8"/><path d="M4 0 L6.4 3.4 M8 0 L10.4 3.4 M12 0 L14.4 3.4" stroke="#383b40" stroke-width="1.6"/><rect x="6" y="9" width="6.4" height="5" fill="#383b40"/><path d="M7.4 9 V7.6 A1.8 1.8 0 0 1 11 7.6 V9" fill="none" stroke="#383b40" stroke-width="1.1"/></svg>
<svg style="left:643.5px;top:695px;" width="19" height="17" viewBox="0 0 19 17"><path d="M19 0 L19 17 L0 8.5 Z" fill="#d8d8d8"/></svg>
<svg style="left:678px;top:695px;" width="15" height="17" viewBox="0 0 15 17"><rect x="0" y="0" width="1.6" height="17" fill="#d8d8d8"/><path d="M15 2.6 L15 14.4 L3.4 8.5 Z" fill="#d8d8d8"/></svg>
<svg style="left:709px;top:695px;" width="19" height="17" viewBox="0 0 19 17"><path d="M0 0 L0 17 L19 8.5 Z" fill="#d8d8d8"/></svg>
<svg style="left:745px;top:696.5px;" width="14" height="14" viewBox="0 0 14 14"><rect width="14" height="14" fill="#d8d8d8"/></svg>
<svg style="left:776.5px;top:695px;" width="16.5" height="17" viewBox="0 0 16.5 17"><rect x="0" y="0" width="1.6" height="17" fill="#d8d8d8"/><path d="M4 2.6 L4 14.4 L16.5 8.5 Z" fill="#d8d8d8"/></svg>
<svg style="left:810px;top:695px;" width="15" height="17" viewBox="0 0 15 17"><rect x="13.4" y="0" width="1.6" height="17" fill="#d8d8d8"/><path d="M0 2.6 L0 14.4 L11.6 8.5 Z" fill="#d8d8d8"/></svg>
<svg style="left:916px;top:693.9px;" width="22" height="18" viewBox="-11 -9 22 18"><path d="M0 -8.4 V-4 M0 4 V8.4 M-3 -8.4 H3 M-3 8.4 H3" stroke="#d8d8d8" stroke-width="1.2"/><path d="M0 -4.4 L4.4 0 L0 4.4 L-4.4 0 Z" fill="#383b40" stroke="#d8d8d8" stroke-width="1.2"/><path d="M0 -4.4 L-4.4 0 L0 4.4 Z" fill="#d8d8d8"/><path d="M10.4 -3 V3 L5.8 0 Z" fill="#d8d8d8"/></svg>
<svg style="left:956px;top:702.3px;" width="11" height="1.4" viewBox="0 0 11 1.4"><rect width="11" height="1.4" fill="#a8a8a8"/></svg>
<div style="left:978px;top:688px;width:80px;height:30px;background:#1f2227;"></div>
<div style="left:1042px;top:688px;width:16px;height:30px;background:#22252a;"></div>
<div style="left:983.50px;top:693.80px;height:20px;line-height:20px;font-size:12.5px;color:#e4e4e4;white-space:pre;letter-spacing:0.040px;">f 26955</div>
<svg style="left:1045.5px;top:693px;" width="8" height="20" viewBox="-4 -10 8 20"><path d="M-3.75 -3.95 L0 -8.45 L3.75 -3.95 Z M-3.75 3.95 L0 8.45 L3.75 3.95 Z" fill="#d0d0d0"/></svg>
<svg style="left:1064px;top:691.9px;" width="22" height="22" viewBox="-11 -11 22 22"><circle r="7.6" fill="none" stroke="#d4d4d4" stroke-width="2.1" stroke-dasharray="4.2 1.9" transform="rotate(-28)"/><rect x="1.6" y="-10.6" width="9.6" height="9.4" fill="#383b40"/><path d="M3.2 -3.4 V-8.6 H8.4 M3.6 -8.2 L8.8 -3" fill="none" stroke="#d4d4d4" stroke-width="1.9"/></svg>
<svg style="left:1103.0px;top:697.4px;" width="11.0" height="11.0" viewBox="0 0 11.0 11.0"><path d="M5.5 0 V11.0 M0 5.5 H11.0" stroke="#d8d8d8" stroke-width="1.2" fill="none"/></svg>
<svg style="left:1132.6px;top:693.9px;" width="22" height="18" viewBox="-11 -9 22 18"><path d="M0 -8.4 V-4 M0 4 V8.4 M-3 -8.4 H3 M-3 8.4 H3" stroke="#d8d8d8" stroke-width="1.2"/><path d="M0 -4.4 L4.4 0 L0 4.4 L-4.4 0 Z" fill="#383b40" stroke="#d8d8d8" stroke-width="1.2"/><path d="M0 -4.4 L-4.4 0 L0 4.4 Z" fill="#d8d8d8"/><path d="M-10.4 -3 V3 L-5.8 0 Z" fill="#d8d8d8"/></svg>
<div style="left:1158px;top:687px;width:80px;height:32px;background:#383b40;border:1px solid #72b2f6;border-radius:4px;"></div>
<svg style="left:1187px;top:693.9px;" width="22" height="18" viewBox="-11 -9 22 18"><path d="M0 -8.4 V-4 M0 4 V8.4 M-3 -8.4 H3 M-3 8.4 H3" stroke="#86c0ff" stroke-width="1.2"/><path d="M0 -4.4 L4.4 0 L0 4.4 L-4.4 0 Z" fill="#383b40" stroke="#86c0ff" stroke-width="1.2"/><path d="M0 -4.4 L-4.4 0 L0 4.4 Z" fill="#86c0ff"/></svg>
<div style="left:1315px;top:687px;width:32px;height:32px;background:#1f2227;border:1px solid #3a96f0;border-radius:4px;"></div>
<svg style="left:1322px;top:694px;" width="18" height="19" viewBox="0 0 18 19"><path d="M9 0 V13 M6.4 0.5 H11.6" stroke="#d8d8d8" stroke-width="1"/><path d="M9 5 L13 9 L9 13 L5 9 Z" fill="#1f2227" stroke="#d8d8d8" stroke-width="1.3"/><path d="M0 6 H5 M0 9 H3.6 M13 6 H18 M14.4 9 H18" stroke="#d8d8d8" stroke-width="1.2" stroke-dasharray="2.4 1"/><path d="M3 16.4 H13.4 M11 13.8 L13.8 16.4 L11 19" fill="none" stroke="#d8d8d8" stroke-width="1.2"/></svg>
<div style="left:1347px;top:688px;width:71px;height:30px;background:#1f2227;"></div>
<div style="left:1402px;top:688px;width:16px;height:30px;background:#22252a;"></div>
<div style="left:1353.50px;top:693.80px;height:20px;line-height:20px;font-size:12.5px;color:#e4e4e4;white-space:pre;letter-spacing:0.035px;">f 50</div>
<svg style="left:1405.5px;top:693px;" width="8" height="20" viewBox="-4 -10 8 20"><path d="M-3.75 -3.95 L0 -8.45 L3.75 -3.95 Z M-3.75 3.95 L0 8.45 L3.75 3.95 Z" fill="#d0d0d0"/></svg>
<svg style="left:1424px;top:691.9px;" width="22" height="22" viewBox="-11 -11 22 22"><circle r="7.6" fill="none" stroke="#d4d4d4" stroke-width="2.1" stroke-dasharray="4.2 1.9" transform="rotate(-28)"/><rect x="1.6" y="-10.6" width="9.6" height="9.4" fill="#383b40"/><path d="M3.2 -3.4 V-8.6 H8.4 M3.6 -8.2 L8.8 -3" fill="none" stroke="#d4d4d4" stroke-width="1.9"/></svg>
<div style="left:1455px;top:504px;width:1px;height:26px;background:#e8e8e8;"></div>
<div style="left:714px;top:723px;width:25px;height:1px;background:#e8e8e8;"></div>
<div style="left:399px;top:360px;width:1px;height:26px;background:#e8e8e8;"></div>
<div style="left:1458px;top:27px;width:281px;height:24px;background:#2c2f34;"></div>
<div style="left:1509px;top:27px;width:72px;height:24px;background:#212429;"></div>
<div style="left:1458px;top:52px;width:1px;height:675px;background:#2c2f34;"></div>
<div style="left:1509px;top:52px;width:1px;height:675px;background:#2c2f34;"></div>
<div style="left:1918px;top:52px;width:2px;height:675px;background:#2c2f34;"></div>
<div style="left:1466.00px;top:29.00px;height:20px;line-height:20px;font-size:12.5px;color:#e4e4e4;white-space:pre;letter-spacing:-0.291px;">Scene</div>
<div style="left:1517.00px;top:29.00px;height:20px;line-height:20px;font-size:12.5px;color:#e4e4e4;white-space:pre;letter-spacing:0.089px;">Container</div>
<div style="left:1589.00px;top:29.00px;height:20px;line-height:20px;font-size:12.5px;color:#e4e4e4;white-space:pre;letter-spacing:0.089px;">Camera</div>
<div style="left:1650.00px;top:29.00px;height:20px;line-height:20px;font-size:12.5px;color:#e4e4e4;white-space:pre;letter-spacing:0.178px;">Light</div>
<div style="left:1695.00px;top:29.00px;height:20px;line-height:20px;font-size:12.5px;color:#e4e4e4;white-space:pre;letter-spacing:0.191px;">Media</div>
<svg style="left:1849.5px;top:30.6px;will-change:transform;" width="18" height="18" viewBox="0 0 18 18"><circle cx="9" cy="9" r="8.2" fill="none" stroke="#dedede" stroke-width="1"/><text x="9" y="13.2" font-size="12" font-weight="700" fill="#dedede" text-anchor="middle" font-family="Liberation Sans, sans-serif">?</text></svg><svg style="left:1877.5px;top:33.6px;" width="12" height="12" viewBox="0 0 12 12"><path d="M0.4 3.8 V0.4 H3.8 M8.2 0.4 H11.6 V3.8 M11.6 8.2 V11.6 H8.2 M3.8 11.6 H0.4 V8.2" fill="none" stroke="#dedede" stroke-width="1.4"/><path d="M0.8 0.8 L4.4 4.4 M11.2 0.8 L7.6 4.4 M11.2 11.2 L7.6 7.6 M0.8 11.2 L4.4 7.6" stroke="#dedede" stroke-width="1.4"/></svg><svg style="left:1902.8px;top:34.4px;" width="10.4" height="10.4" viewBox="0 0 10.4 10.4"><path d="M0.9 0.9 L9.5 9.5 M9.5 0.9 L0.9 9.5" stroke="#dedede" stroke-width="2.5"/></svg>
<div style="left:1468.00px;top:60.00px;height:20px;line-height:20px;font-size:12.5px;color:#e4e4e4;white-space:pre;letter-spacing:-0.315px;">1 sel.</div>
<div style="left:1460px;top:84px;width:22px;height:21px;background:#1f2227;border:1px solid #3a96f0;border-radius:3px;"></div>
<svg style="left:1463.862px;top:89.34px;" width="14.276000000000002" height="10.32" viewBox="0 0 16.6 12"><path d="M0 6 C3.2 -0.4 13.4 -0.4 16.6 6 C13.4 12.4 3.2 12.4 0 6 Z" fill="#e6e6e6"/><circle cx="8.3" cy="6" r="3.9" fill="#1f2227"/><circle cx="8.3" cy="6" r="2.1" fill="#e6e6e6"/></svg>
<div style="left:1483px;top:84px;width:22px;height:21px;background:#595c60;border-radius:3px;"></div>
<svg style="left:1487.894px;top:87.42px;" width="12.212" height="13.76" viewBox="0 0 14.2 16"><path d="M3.5 7.5 V4.4 A3.4 3.4 0 0 1 10 3.1" fill="none" stroke="#d6d6d6" stroke-width="2.2"/><rect x="0" y="7" width="14.2" height="9" rx="0.9" fill="#d6d6d6"/><circle cx="7.1" cy="9.9" r="1.5" fill="#595c60"/><path d="M6.5 10 L5.9 14.5 H8.3 L7.7 10 Z" fill="#595c60"/></svg>
<div style="left:1470px;top:120px;width:34px;height:34px;background:#383b40;border:1px solid #3a96f0;"></div>
<svg style="left:1475px;top:127px;will-change:transform;" width="25.0" height="25.0" viewBox="-12 -12 25.00 25.00"><g transform="translate(0.20,0.50)"><path d="M0 -5 V0 M0 0 L-5.4 3.3 M0 0 L5 3.3" stroke="#d4d4d4" stroke-width="1.15" fill="none"/><text x="0" y="-5.7" font-size="6.4" fill="#d4d4d4" text-anchor="middle" font-family="Liberation Sans, sans-serif" font-weight="700">Y</text><text x="-7.8" y="8.3" font-size="6.4" fill="#d4d4d4" text-anchor="middle" font-family="Liberation Sans, sans-serif" font-weight="700">Z</text><text x="7.8" y="8.3" font-size="6.4" fill="#d4d4d4" text-anchor="middle" font-family="Liberation Sans, sans-serif" font-weight="700">X</text></g></svg>
<svg style="left:1458.6px;top:168.4px;" width="11" height="11" viewBox="0 0 11 11"><circle cx="5.5" cy="5.5" r="4.4" fill="none" stroke="#c8c8c8" stroke-width="1"/><circle cx="5.5" cy="5.5" r="1.9" fill="#d8d8d8"/></svg>
<div style="left:1472px;top:156px;width:32px;height:34px;background:#3a3d42;"></div>
<svg style="left:1471.9px;top:157px;" width="32" height="32" viewBox="0 0 32 32"><path d="M10.60 8.80 L15.00 8.80 M9.84 10.64 L12.95 13.75 M8.00 11.40 L8.00 15.80 M6.16 10.64 L3.05 13.75 M5.40 8.80 L1.00 8.80 M6.16 6.96 L3.05 3.85 M8.00 6.20 L8.00 1.80 M9.84 6.96 L12.95 3.85 " stroke="#d6d6d6" stroke-width="1.2" fill="none"/><circle cx="8" cy="8.8" r="2.7" fill="#9a9a9a"/><path d="M17 8.4 L29.6 20.2 M14.5 15.2 L25.3 25.7 M8.3 18.3 L22 30.7" stroke="#d6d6d6" stroke-width="1.4" fill="none"/></svg>
<div style="left:1515px;top:59px;width:131px;height:25px;background:#1f2227;border:1px solid #3a96f0;border-radius:3px;"></div>
<div style="left:1561.50px;top:61.50px;height:20px;line-height:20px;font-size:12.5px;color:#e4e4e4;white-space:pre;letter-spacing:0.193px;">Parent</div>
<div style="left:1647px;top:59px;width:131px;height:25px;background:#595c60;border-radius:3px;"></div>
<div style="left:1697.50px;top:61.50px;height:20px;line-height:20px;font-size:12.5px;color:#e4e4e4;white-space:pre;letter-spacing:-0.178px;">Local</div>
<div style="left:1779px;top:59px;width:131px;height:25px;background:#595c60;border-radius:3px;"></div>
<div style="left:1827.50px;top:61.50px;height:20px;line-height:20px;font-size:12.5px;color:#e4e4e4;white-space:pre;letter-spacing:0.116px;">World</div>
<div style="left:1515px;top:87px;width:197px;height:25px;background:#1f2227;border:1px solid #3a96f0;border-radius:3px;"></div>
<div style="left:1589.00px;top:89.50px;height:20px;line-height:20px;font-size:12.5px;color:#e4e4e4;white-space:pre;letter-spacing:-0.082px;">Absolute</div>
<div style="left:1713px;top:87px;width:197px;height:25px;background:#595c60;border-radius:3px;"></div>
<div style="left:1788.50px;top:89.50px;height:20px;line-height:20px;font-size:12.5px;color:#e4e4e4;white-space:pre;letter-spacing:-0.146px;">Relative</div>
<div style="left:1513.50px;top:128.50px;height:20px;line-height:20px;font-size:12.5px;color:#69a7ea;white-space:pre;letter-spacing:-0.248px;">Position</div>
<div style="left:1561.00px;top:128.50px;height:20px;line-height:20px;font-size:12.5px;color:#69a7ea;white-space:pre;">X</div>
<div style="left:1570px;top:126px;width:91px;height:24px;background:#1f2227;"></div><div style="left:1645px;top:126px;width:16px;height:24px;background:#22252a;"></div><svg style="left:1648.5px;top:128.4px;" width="8" height="20" viewBox="-4 -10 8 20"><path d="M-3.75 -2.1 L0 -6.6 L3.75 -2.1 Z M-3.75 2.1 L0 6.6 L3.75 2.1 Z" fill="#d0d0d0"/></svg>
<div style="left:1665.00px;top:128.50px;height:20px;line-height:20px;font-size:12.5px;color:#69a7ea;white-space:pre;">Y</div>
<div style="left:1674px;top:126px;width:92px;height:24px;background:#1f2227;"></div><div style="left:1750px;top:126px;width:16px;height:24px;background:#22252a;"></div><svg style="left:1753.5px;top:128.4px;" width="8" height="20" viewBox="-4 -10 8 20"><path d="M-3.75 -2.1 L0 -6.6 L3.75 -2.1 Z M-3.75 2.1 L0 6.6 L3.75 2.1 Z" fill="#d0d0d0"/></svg><div style="left:1679.50px;top:128.50px;height:20px;line-height:20px;font-size:12.5px;color:#e4e4e4;white-space:pre;">111.0</div>
<div style="left:1769.50px;top:128.50px;height:20px;line-height:20px;font-size:12.5px;color:#e4e4e4;white-space:pre;">Z</div>
<div style="left:1779px;top:126px;width:91px;height:24px;background:#1f2227;"></div><div style="left:1854px;top:126px;width:16px;height:24px;background:#22252a;"></div><svg style="left:1857.5px;top:128.4px;" width="8" height="20" viewBox="-4 -10 8 20"><path d="M-3.75 -2.1 L0 -6.6 L3.75 -2.1 Z M-3.75 2.1 L0 6.6 L3.75 2.1 Z" fill="#d0d0d0"/></svg><div style="left:1784.50px;top:128.50px;height:20px;line-height:20px;font-size:12.5px;color:#e4e4e4;white-space:pre;">0.0</div>
<div style="left:1513.50px;top:154.50px;height:20px;line-height:20px;font-size:12.5px;color:#69a7ea;white-space:pre;letter-spacing:-0.195px;">Rotation</div>
<div style="left:1561.00px;top:154.50px;height:20px;line-height:20px;font-size:12.5px;color:#69a7ea;white-space:pre;">X</div>
<div style="left:1570px;top:152px;width:91px;height:24px;background:#1f2227;"></div><div style="left:1645px;top:152px;width:16px;height:24px;background:#22252a;"></div><svg style="left:1648.5px;top:154.4px;" width="8" height="20" viewBox="-4 -10 8 20"><path d="M-3.75 -2.1 L0 -6.6 L3.75 -2.1 Z M-3.75 2.1 L0 6.6 L3.75 2.1 Z" fill="#d0d0d0"/></svg><div style="left:1575.50px;top:154.50px;height:20px;line-height:20px;font-size:12.5px;color:#e4e4e4;white-space:pre;">-1546.0</div><div style="left:1627.50px;top:154.00px;height:20px;line-height:20px;font-size:12.5px;color:#e4e4e4;white-space:pre;">-</div><div style="left:1635.00px;top:154.00px;height:20px;line-height:20px;font-size:13px;color:#e4e4e4;white-space:pre;">+</div>
<div style="left:1665.00px;top:154.50px;height:20px;line-height:20px;font-size:12.5px;color:#69a7ea;white-space:pre;">Y</div>
<div style="left:1674px;top:152px;width:92px;height:24px;background:#1f2227;"></div><div style="left:1750px;top:152px;width:16px;height:24px;background:#22252a;"></div><svg style="left:1753.5px;top:154.4px;" width="8" height="20" viewBox="-4 -10 8 20"><path d="M-3.75 -2.1 L0 -6.6 L3.75 -2.1 Z M-3.75 2.1 L0 6.6 L3.75 2.1 Z" fill="#d0d0d0"/></svg><div style="left:1679.50px;top:154.50px;height:20px;line-height:20px;font-size:12.5px;color:#e4e4e4;white-space:pre;">-27.0</div><div style="left:1732.50px;top:154.00px;height:20px;line-height:20px;font-size:12.5px;color:#e4e4e4;white-space:pre;">-</div><div style="left:1740.00px;top:154.00px;height:20px;line-height:20px;font-size:13px;color:#e4e4e4;white-space:pre;">+</div>
<div style="left:1769.50px;top:154.50px;height:20px;line-height:20px;font-size:12.5px;color:#e4e4e4;white-space:pre;">Z</div>
<div style="left:1779px;top:152px;width:91px;height:24px;background:#1f2227;"></div><div style="left:1854px;top:152px;width:16px;height:24px;background:#22252a;"></div><svg style="left:1857.5px;top:154.4px;" width="8" height="20" viewBox="-4 -10 8 20"><path d="M-3.75 -2.1 L0 -6.6 L3.75 -2.1 Z M-3.75 2.1 L0 6.6 L3.75 2.1 Z" fill="#d0d0d0"/></svg><div style="left:1784.50px;top:154.50px;height:20px;line-height:20px;font-size:12.5px;color:#e4e4e4;white-space:pre;">0.0</div><div style="left:1836.50px;top:154.00px;height:20px;line-height:20px;font-size:12.5px;color:#e4e4e4;white-space:pre;">-</div><div style="left:1844.00px;top:154.00px;height:20px;line-height:20px;font-size:13px;color:#e4e4e4;white-space:pre;">+</div>
<div style="left:1513.50px;top:180.50px;height:20px;line-height:20px;font-size:12.5px;color:#e4e4e4;white-space:pre;letter-spacing:-0.456px;">Scale</div>
<div style="left:1561.00px;top:180.50px;height:20px;line-height:20px;font-size:12.5px;color:#e4e4e4;white-space:pre;">X</div>
<div style="left:1570px;top:178px;width:91px;height:24px;background:#1f2227;"></div><div style="left:1645px;top:178px;width:16px;height:24px;background:#22252a;"></div><svg style="left:1648.5px;top:180.4px;" width="8" height="20" viewBox="-4 -10 8 20"><path d="M-3.75 -2.1 L0 -6.6 L3.75 -2.1 Z M-3.75 2.1 L0 6.6 L3.75 2.1 Z" fill="#d0d0d0"/></svg>
<div style="left:1665.00px;top:180.50px;height:20px;line-height:20px;font-size:12.5px;color:#e4e4e4;white-space:pre;">Y</div>
<div style="left:1674px;top:178px;width:92px;height:24px;background:#1f2227;"></div><div style="left:1750px;top:178px;width:16px;height:24px;background:#22252a;"></div><svg style="left:1753.5px;top:180.4px;" width="8" height="20" viewBox="-4 -10 8 20"><path d="M-3.75 -2.1 L0 -6.6 L3.75 -2.1 Z M-3.75 2.1 L0 6.6 L3.75 2.1 Z" fill="#d0d0d0"/></svg><div style="left:1679.50px;top:180.50px;height:20px;line-height:20px;font-size:12.5px;color:#e4e4e4;white-space:pre;">1.0</div>
<div style="left:1769.50px;top:180.50px;height:20px;line-height:20px;font-size:12.5px;color:#e4e4e4;white-space:pre;">Z</div>
<div style="left:1779px;top:178px;width:91px;height:24px;background:#1f2227;"></div><div style="left:1854px;top:178px;width:16px;height:24px;background:#22252a;"></div><svg style="left:1857.5px;top:180.4px;" width="8" height="20" viewBox="-4 -10 8 20"><path d="M-3.75 -2.1 L0 -6.6 L3.75 -2.1 Z M-3.75 2.1 L0 6.6 L3.75 2.1 Z" fill="#d0d0d0"/></svg><div style="left:1784.50px;top:180.50px;height:20px;line-height:20px;font-size:12.5px;color:#e4e4e4;white-space:pre;">1.0</div>
<svg style="left:1876.5px;top:131px;" width="15" height="15" viewBox="0 0 15 15"><path d="M7.5 0 V15 M0 7.5 H15" stroke="#d6d6d6" stroke-width="1"/><path d="M7.5 4.2 L10.8 7.5 L7.5 10.8 L4.2 7.5 Z" fill="#d6d6d6"/></svg>
<svg style="left:1877.5px;top:158px;" width="13" height="13" viewBox="0 0 13 13"><path d="M0.5 0.5 L12.5 12.5 M12.5 0.5 L0.5 12.5" stroke="#d6d6d6" stroke-width="1.2"/><rect x="3.8" y="3.8" width="5.4" height="5.4" fill="#d6d6d6"/></svg>
<div style="left:1875.50px;top:180.50px;height:20px;line-height:20px;font-size:10.5px;color:#e4e4e4;white-space:pre;font-weight:700;">S</div>
<div style="left:1886px;top:180px;width:13px;height:20px;background:#1f2227;border:1px solid #3a96f0;border-radius:3px;"></div>
<div style="left:1889.50px;top:180.50px;height:20px;line-height:20px;font-size:10.5px;color:#e4e4e4;white-space:pre;font-weight:700;">L</div>
<div style="left:1902.50px;top:180.50px;height:20px;line-height:20px;font-size:10.5px;color:#e4e4e4;white-space:pre;font-weight:700;">P</div>
<div style="left:1513.50px;top:219.00px;height:20px;line-height:20px;font-size:12.5px;color:#e4e4e4;white-space:pre;letter-spacing:-0.159px;">Pivot</div>
<div style="left:1561.00px;top:209.50px;height:20px;line-height:20px;font-size:12.5px;color:#e4e4e4;white-space:pre;">X</div>
<div style="left:1570px;top:207px;width:91px;height:24px;background:#1f2227;"></div><div style="left:1645px;top:207px;width:16px;height:24px;background:#22252a;"></div><svg style="left:1648.5px;top:209.4px;" width="8" height="20" viewBox="-4 -10 8 20"><path d="M-3.75 -2.1 L0 -6.6 L3.75 -2.1 Z M-3.75 2.1 L0 6.6 L3.75 2.1 Z" fill="#d0d0d0"/></svg><div style="left:1575.50px;top:209.50px;height:20px;line-height:20px;font-size:12.5px;color:#e4e4e4;white-space:pre;">0.0</div>
<div style="left:1665.00px;top:209.50px;height:20px;line-height:20px;font-size:12.5px;color:#e4e4e4;white-space:pre;">Y</div>
<div style="left:1674px;top:207px;width:92px;height:24px;background:#1f2227;"></div><div style="left:1750px;top:207px;width:16px;height:24px;background:#22252a;"></div><svg style="left:1753.5px;top:209.4px;" width="8" height="20" viewBox="-4 -10 8 20"><path d="M-3.75 -2.1 L0 -6.6 L3.75 -2.1 Z M-3.75 2.1 L0 6.6 L3.75 2.1 Z" fill="#d0d0d0"/></svg><div style="left:1679.50px;top:209.50px;height:20px;line-height:20px;font-size:12.5px;color:#e4e4e4;white-space:pre;">0.0</div>
<div style="left:1769.50px;top:209.50px;height:20px;line-height:20px;font-size:12.5px;color:#e4e4e4;white-space:pre;">Z</div>
<div style="left:1779px;top:207px;width:91px;height:24px;background:#1f2227;"></div><div style="left:1854px;top:207px;width:16px;height:24px;background:#22252a;"></div><svg style="left:1857.5px;top:209.4px;" width="8" height="20" viewBox="-4 -10 8 20"><path d="M-3.75 -2.1 L0 -6.6 L3.75 -2.1 Z M-3.75 2.1 L0 6.6 L3.75 2.1 Z" fill="#d0d0d0"/></svg><div style="left:1784.50px;top:209.50px;height:20px;line-height:20px;font-size:12.5px;color:#e4e4e4;white-space:pre;">0.0</div>
<svg style="left:1590px;top:234px;" width="7" height="12" viewBox="0 0 7 12"><rect x="0" y="0" width="1.3" height="12" fill="#d8d8d8"/><rect x="2.6" y="3.8" width="3.2" height="4.2" fill="#d8d8d8" opacity="0.85"/></svg><svg style="left:1611px;top:234px;" width="10" height="12" viewBox="0 0 10 12"><rect x="4.4" y="0" width="1.3" height="12" fill="#d8d8d8"/><rect x="0.6" y="3.8" width="3" height="4.2" fill="#d8d8d8" opacity="0.85"/><rect x="6.6" y="3.8" width="3" height="4.2" fill="#d8d8d8" opacity="0.85"/></svg><svg style="left:1636px;top:234px;" width="7" height="12" viewBox="0 0 7 12"><rect x="4.8" y="0" width="1.3" height="12" fill="#d8d8d8"/><rect x="0.6" y="3.8" width="3.2" height="4.2" fill="#d8d8d8" opacity="0.85"/></svg>
<svg style="left:1694px;top:234px;" width="12" height="12" viewBox="0 0 12 12"><rect x="0" y="10.6" width="12" height="1.3" fill="#d8d8d8"/><rect x="3.6" y="6" width="4.8" height="3" fill="#d8d8d8" opacity="0.85"/></svg><svg style="left:1714px;top:234px;" width="12" height="12" viewBox="0 0 12 12"><rect x="0" y="5.4" width="12" height="1.3" fill="#d8d8d8"/><rect x="3.6" y="1.6" width="4.8" height="2.8" fill="#d8d8d8" opacity="0.85"/><rect x="3.6" y="7.8" width="4.8" height="2.8" fill="#d8d8d8" opacity="0.85"/></svg><svg style="left:1734px;top:234px;" width="12" height="12" viewBox="0 0 12 12"><rect x="0" y="0" width="12" height="1.3" fill="#d8d8d8"/><rect x="3.6" y="2.6" width="4.8" height="3" fill="#d8d8d8" opacity="0.85"/></svg>
<svg style="left:1798px;top:234.5px;" width="12" height="11" viewBox="0 0 12 11"><rect x="4.5" y="0.5" width="7" height="5.6" fill="#d8d8d8" stroke="#d8d8d8" stroke-width="1"/><rect x="0.5" y="4.5" width="7" height="5.6" fill="#383b40" stroke="#d8d8d8" stroke-width="1"/></svg><svg style="left:1818px;top:234.5px;" width="12" height="11" viewBox="0 0 12 11"><rect x="4.5" y="0.5" width="7" height="5.6" fill="none" stroke="#d8d8d8" stroke-width="1"/><rect x="0.5" y="4.5" width="7" height="5.6" fill="#383b40" stroke="#d8d8d8" stroke-width="1"/><rect x="2.4" y="6.2" width="3.4" height="2.4" fill="#d8d8d8"/></svg><svg style="left:1838px;top:234.5px;" width="12" height="11" viewBox="0 0 12 11"><rect x="4.5" y="0.5" width="7" height="5.6" fill="none" stroke="#d8d8d8" stroke-width="1"/><rect x="0.5" y="4.5" width="7" height="5.6" fill="#d8d8d8" stroke="#d8d8d8" stroke-width="1"/></svg>
<div style="left:1513.50px;top:255.00px;height:20px;line-height:20px;font-size:12.5px;color:#e4e4e4;white-space:pre;letter-spacing:-0.070px;">Mode</div>
<div style="left:1561px;top:252px;width:309px;height:25px;background:#595c60;border-radius:4px;"></div>
<div style="left:1567.00px;top:255.00px;height:20px;line-height:20px;font-size:12.5px;color:#e4e4e4;white-space:pre;letter-spacing:-0.938px;">XYZ</div>
<svg style="left:1853px;top:262.5px;" width="8" height="5" viewBox="0 0 8 5"><path d="M0 0 H8 L4 4.6 Z" fill="#d8d8d8"/></svg>
<div style="left:1510px;top:280px;width:405px;height:22px;background:#46494e;"></div>
<svg style="left:1517px;top:289.0px;" width="8" height="5" viewBox="0 0 8 5"><path d="M0.7 0.7 L4 3.9 L7.3 0.7" fill="none" stroke="#dcdcdc" stroke-width="1.4"/></svg>
<div style="left:1537.50px;top:281.50px;height:20px;line-height:20px;font-size:12.5px;color:#9c9ea1;white-space:pre;font-weight:700;letter-spacing:0.677px;">Screen Transformations</div>
<div style="left:1528.50px;top:323.00px;height:20px;line-height:20px;font-size:12.5px;color:#8f9296;white-space:pre;letter-spacing:-0.112px;">Bounding Box</div>
<div style="left:1607.00px;top:313.50px;height:20px;line-height:20px;font-size:12.5px;color:#4a7bb5;white-space:pre;">X</div>
<div style="left:1616px;top:311px;width:112px;height:24px;background:#1f2227;"></div><div style="left:1712px;top:311px;width:16px;height:24px;background:#22252a;"></div><svg style="left:1715.5px;top:313.4px;" width="8" height="20" viewBox="-4 -10 8 20"><path d="M-3.75 -2.1 L0 -6.6 L3.75 -2.1 Z M-3.75 2.1 L0 6.6 L3.75 2.1 Z" fill="#a4a6a8"/></svg>
<div style="left:1732.00px;top:313.50px;height:20px;line-height:20px;font-size:12.5px;color:#4a7bb5;white-space:pre;">Y</div>
<div style="left:1741px;top:311px;width:112px;height:24px;background:#1f2227;"></div><div style="left:1837px;top:311px;width:16px;height:24px;background:#22252a;"></div><svg style="left:1840.5px;top:313.4px;" width="8" height="20" viewBox="-4 -10 8 20"><path d="M-3.75 -2.1 L0 -6.6 L3.75 -2.1 Z M-3.75 2.1 L0 6.6 L3.75 2.1 Z" fill="#a4a6a8"/></svg>
<svg style="left:1646px;top:338px;" width="7" height="12" viewBox="0 0 7 12"><rect x="0" y="0" width="1.3" height="12" fill="#85888b"/><rect x="2.6" y="3.8" width="3.2" height="4.2" fill="#85888b" opacity="0.85"/></svg><svg style="left:1667px;top:338px;" width="10" height="12" viewBox="0 0 10 12"><rect x="4.4" y="0" width="1.3" height="12" fill="#85888b"/><rect x="0.6" y="3.8" width="3" height="4.2" fill="#85888b" opacity="0.85"/><rect x="6.6" y="3.8" width="3" height="4.2" fill="#85888b" opacity="0.85"/></svg><svg style="left:1692px;top:338px;" width="7" height="12" viewBox="0 0 7 12"><rect x="4.8" y="0" width="1.3" height="12" fill="#85888b"/><rect x="0.6" y="3.8" width="3.2" height="4.2" fill="#85888b" opacity="0.85"/></svg>
<svg style="left:1771px;top:338px;" width="12" height="12" viewBox="0 0 12 12"><rect x="0" y="10.6" width="12" height="1.3" fill="#85888b"/><rect x="3.6" y="6" width="4.8" height="3" fill="#85888b" opacity="0.85"/></svg><svg style="left:1791px;top:338px;" width="12" height="12" viewBox="0 0 12 12"><rect x="0" y="5.4" width="12" height="1.3" fill="#85888b"/><rect x="3.6" y="1.6" width="4.8" height="2.8" fill="#85888b" opacity="0.85"/><rect x="3.6" y="7.8" width="4.8" height="2.8" fill="#85888b" opacity="0.85"/></svg><svg style="left:1811px;top:338px;" width="12" height="12" viewBox="0 0 12 12"><rect x="0" y="0" width="12" height="1.3" fill="#85888b"/><rect x="3.6" y="2.6" width="4.8" height="3" fill="#85888b" opacity="0.85"/></svg>
<div style="left:1528.50px;top:358.50px;height:20px;line-height:20px;font-size:12.5px;color:#8f9296;white-space:pre;letter-spacing:-0.089px;">Center</div>
<div style="left:1607.00px;top:358.50px;height:20px;line-height:20px;font-size:12.5px;color:#4a7bb5;white-space:pre;">X</div>
<div style="left:1616px;top:356px;width:112px;height:24px;background:#1f2227;"></div><div style="left:1712px;top:356px;width:16px;height:24px;background:#22252a;"></div><svg style="left:1715.5px;top:358.4px;" width="8" height="20" viewBox="-4 -10 8 20"><path d="M-3.75 -2.1 L0 -6.6 L3.75 -2.1 Z M-3.75 2.1 L0 6.6 L3.75 2.1 Z" fill="#a4a6a8"/></svg>
<div style="left:1732.00px;top:358.50px;height:20px;line-height:20px;font-size:12.5px;color:#4a7bb5;white-space:pre;">Y</div>
<div style="left:1741px;top:356px;width:112px;height:24px;background:#1f2227;"></div><div style="left:1837px;top:356px;width:16px;height:24px;background:#22252a;"></div><svg style="left:1840.5px;top:358.4px;" width="8" height="20" viewBox="-4 -10 8 20"><path d="M-3.75 -2.1 L0 -6.6 L3.75 -2.1 Z M-3.75 2.1 L0 6.6 L3.75 2.1 Z" fill="#a4a6a8"/></svg>
<div style="left:1528.50px;top:384.50px;height:20px;line-height:20px;font-size:12.5px;color:#4a7bb5;white-space:pre;letter-spacing:-0.264px;">Screen Size</div>
<div style="left:1607.00px;top:384.50px;height:20px;line-height:20px;font-size:12.5px;color:#4a7bb5;white-space:pre;">X</div>
<div style="left:1616px;top:382px;width:112px;height:24px;background:#1f2227;"></div><div style="left:1712px;top:382px;width:16px;height:24px;background:#22252a;"></div><svg style="left:1715.5px;top:384.4px;" width="8" height="20" viewBox="-4 -10 8 20"><path d="M-3.75 -2.1 L0 -6.6 L3.75 -2.1 Z M-3.75 2.1 L0 6.6 L3.75 2.1 Z" fill="#a4a6a8"/></svg>
<div style="left:1732.00px;top:384.50px;height:20px;line-height:20px;font-size:12.5px;color:#4a7bb5;white-space:pre;">Y</div>
<div style="left:1741px;top:382px;width:112px;height:24px;background:#1f2227;"></div><div style="left:1837px;top:382px;width:16px;height:24px;background:#22252a;"></div><svg style="left:1840.5px;top:384.4px;" width="8" height="20" viewBox="-4 -10 8 20"><path d="M-3.75 -2.1 L0 -6.6 L3.75 -2.1 Z M-3.75 2.1 L0 6.6 L3.75 2.1 Z" fill="#a4a6a8"/></svg>
<svg style="left:1860px;top:361px;" width="15" height="15" viewBox="0 0 15 15"><rect x="0" y="0" width="6.6" height="6.6" fill="#7c7f83"/><rect x="8.4" y="0" width="6.6" height="6.6" fill="#7c7f83"/><rect x="0" y="8.4" width="6.6" height="6.6" fill="#7c7f83"/><rect x="8.4" y="8.4" width="6.6" height="6.6" fill="#7c7f83"/><path d="M5.4 0 V15 M0 9.6 H15" stroke="#383b40" stroke-width="0"/></svg>
<svg style="left:1860px;top:387px;" width="15" height="15" viewBox="0 0 15 15"><rect x="0.5" y="0.5" width="14" height="14" fill="none" stroke="#7c7f83" stroke-width="1"/><rect x="0.5" y="8.5" width="6" height="6" fill="none" stroke="#7c7f83" stroke-width="1"/><path d="M7.5 7.5 L12 3 M8.6 3 H12 V6.4" fill="none" stroke="#7c7f83" stroke-width="1"/></svg>
<svg style="left:1887px;top:387px;" width="15" height="15" viewBox="0 0 15 15"><rect x="0.5" y="0.5" width="14" height="14" fill="none" stroke="#7c7f83" stroke-width="1"/><path d="M0.5 7.5 H7 V14.5 M7 7.5 L3 3.5 M7 7.5 L11.5 3 M8.6 3 H12 V6.4 M3 6 V3.2 H6" fill="none" stroke="#7c7f83" stroke-width="1"/></svg>
<div style="left:1510px;top:415px;width:405px;height:22px;background:#46494e;"></div>
<svg style="left:1517px;top:424.0px;" width="8" height="5" viewBox="0 0 8 5"><path d="M0.7 0.7 L4 3.9 L7.3 0.7" fill="none" stroke="#e4e4e4" stroke-width="1.4"/></svg>
<div style="left:1537.50px;top:416.00px;height:20px;line-height:20px;font-size:12.5px;color:#f0f0f0;white-space:pre;font-weight:700;letter-spacing:0.770px;">Container Info</div>
<div style="left:1525.50px;top:445.00px;height:20px;line-height:20px;font-size:12.5px;color:#e4e4e4;white-space:pre;letter-spacing:0.038px;">Current Container</div>
<div style="left:1535.00px;top:464.00px;height:20px;line-height:20px;font-size:12.5px;color:#e4e4e4;white-space:pre;letter-spacing:-0.184px;">Width:  0.00</div>
<div style="left:1535.00px;top:481.00px;height:20px;line-height:20px;font-size:12.5px;color:#e4e4e4;white-space:pre;letter-spacing:-0.077px;">Height: 0.00</div>
<div style="left:1535.00px;top:498.00px;height:20px;line-height:20px;font-size:12.5px;color:#e4e4e4;white-space:pre;letter-spacing:-0.134px;">Depth:  0.00</div>
<div style="left:1535.00px;top:532.00px;height:20px;line-height:20px;font-size:12.5px;color:#e4e4e4;white-space:pre;letter-spacing:-0.105px;">Containers: 1</div>
<div style="left:1535.00px;top:549.00px;height:20px;line-height:20px;font-size:12.5px;color:#e4e4e4;white-space:pre;letter-spacing:-0.139px;">Vertices:   0</div>
<div style="left:1535.00px;top:566.00px;height:20px;line-height:20px;font-size:12.5px;color:#e4e4e4;white-space:pre;letter-spacing:-0.044px;">Primitives: 0</div>
<div style="left:396px;top:52px;width:1px;height:669px;background:#2d3035;"></div>
<div style="left:0px;top:720px;width:397px;height:1px;background:#2d3035;"></div>
<div style="left:402px;top:720px;width:1052px;height:1px;background:#2d3035;"></div>
<div style="left:1453px;top:52px;width:1px;height:669px;background:#2d3035;"></div>
<svg style="left:0;top:0" width="1920" height="727" viewBox="0 0 1920 727"><path d="M388 313.55 L1507 149.2" stroke="#ffd700" stroke-width="5.9" fill="none"/><path d="M343 321.3 L388.4 305.4 L390.9 322.6 Z" fill="#ffd700"/><path d="M385.5 342.6 L1552 198.3" stroke="#ffd700" stroke-width="5.9" fill="none"/><path d="M340.5 346.5 L385.9 333.2 L388 350.8 Z" fill="#ffd700"/></svg>
<div style="left:59px;top:83px;width:37px;height:37px;border:4px solid #ffd700;"></div>
<div style="left:97.5px;top:321px;width:237.5px;height:41px;border:4.5px solid #ffd700;"></div>
<div style="left:1505px;top:125px;width:74px;height:28.5px;border:4.2px solid #ffd700;"></div>
<div style="left:1549.7px;top:177.4px;width:28.09999999999991px;height:28.19999999999999px;border:4.2px solid #ffd700;"></div>
<div style="left:232.9px;top:98.7px;width:52.4px;height:52.4px;border-radius:50%;background:#ffd700;box-shadow:0 1.5px 4px rgba(0,0,0,0.55);color:#3b3e44;font-weight:700;font-size:39px;-webkit-text-stroke:0.6px #3b3e44;line-height:54.4px;text-align:center;">1</div>
<div style="left:262.9px;top:330.7px;width:52.4px;height:52.4px;border-radius:50%;background:#ffd700;box-shadow:0 1.5px 4px rgba(0,0,0,0.55);color:#3b3e44;font-weight:700;font-size:39px;-webkit-text-stroke:0.6px #3b3e44;line-height:54.4px;text-align:center;">4</div>
<div style="left:1576.9px;top:99.9px;width:52.4px;height:52.4px;border-radius:50%;background:#ffd700;box-shadow:0 1.5px 4px rgba(0,0,0,0.55);color:#3b3e44;font-weight:700;font-size:39px;-webkit-text-stroke:0.6px #3b3e44;line-height:54.4px;text-align:center;">2</div>
<div style="left:1576.9px;top:163.2px;width:52.4px;height:52.4px;border-radius:50%;background:#ffd700;box-shadow:0 1.5px 4px rgba(0,0,0,0.55);color:#3b3e44;font-weight:700;font-size:39px;-webkit-text-stroke:0.6px #3b3e44;line-height:54.4px;text-align:center;">3</div>
</body></html>
